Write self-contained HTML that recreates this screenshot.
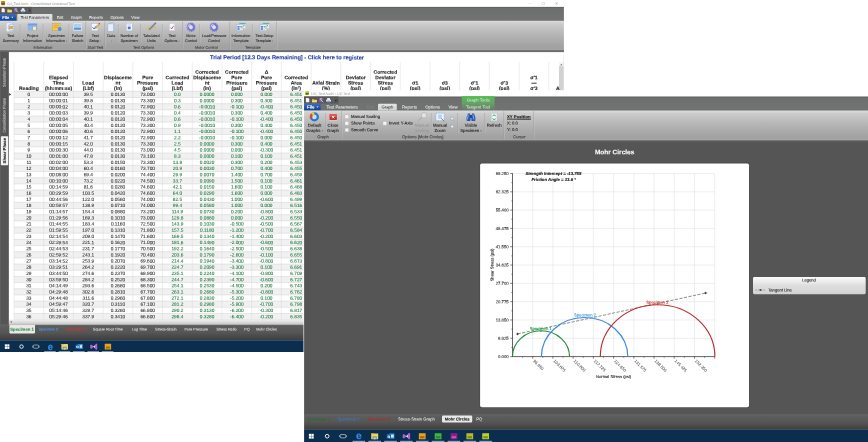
<!DOCTYPE html>
<html lang="en"><head><meta charset="utf-8"><title>CU_Test.hsdn - Consolidated Undrained Test / Mohr Circles</title>
<style>
html,body{margin:0;padding:0;background:#ffffff;}
body{width:868px;height:442px;overflow:hidden;}
svg{display:block;will-change:transform;}
svg text{font-family:"Liberation Sans",sans-serif;text-rendering:geometricPrecision;}
</style></head>
<body>
<svg width="868" height="442" viewBox="0 0 868 442">
<defs>
<linearGradient id="gRib" x1="0" y1="0" x2="0" y2="1">
 <stop offset="0" stop-color="#dddddd"/><stop offset="0.1" stop-color="#cccccc"/><stop offset="0.45" stop-color="#b6b6b6"/><stop offset="0.85" stop-color="#a3a3a3"/><stop offset="1" stop-color="#a0a0a0"/>
</linearGradient>
<linearGradient id="gBar" x1="0" y1="0" x2="0" y2="1">
 <stop offset="0" stop-color="#5c5c5c"/><stop offset="0.12" stop-color="#6d6e6e"/><stop offset="0.9" stop-color="#717272"/><stop offset="1" stop-color="#696a6a"/>
</linearGradient>
<linearGradient id="gFile" x1="0" y1="0" x2="0" y2="1">
 <stop offset="0" stop-color="#3a6cc0"/><stop offset="1" stop-color="#14408e"/>
</linearGradient>
<linearGradient id="gTabSel" x1="0" y1="0" x2="0" y2="1">
 <stop offset="0" stop-color="#e4e4e4"/><stop offset="1" stop-color="#d2d2d2"/>
</linearGradient>
<linearGradient id="gGreen" x1="0" y1="0" x2="0" y2="1">
 <stop offset="0" stop-color="#5cb45c"/><stop offset="0.45" stop-color="#64a464"/><stop offset="0.75" stop-color="#6a8a6a"/><stop offset="1" stop-color="#6c766c"/>
</linearGradient>
<linearGradient id="gBot" x1="0" y1="0" x2="0" y2="1">
 <stop offset="0" stop-color="#686868"/><stop offset="0.1" stop-color="#5d5d5d"/><stop offset="0.5" stop-color="#565656"/><stop offset="1" stop-color="#3d3d3d"/>
</linearGradient>
<linearGradient id="gScroll" x1="0" y1="0" x2="0" y2="1">
 <stop offset="0" stop-color="#f0f0f0"/><stop offset="0.5" stop-color="#dcdcdc"/><stop offset="1" stop-color="#c2c2c2"/>
</linearGradient>
<linearGradient id="gLegend" x1="0" y1="0" x2="0" y2="1">
 <stop offset="0" stop-color="#fbfbfb"/><stop offset="0.5" stop-color="#dedede"/><stop offset="1" stop-color="#d2d2d2"/>
</linearGradient>
<clipPath id="clipW1"><rect x="0" y="0" width="563.9" height="352"/></clipPath>
<clipPath id="clipGrid"><rect x="9" y="52" width="550" height="268"/></clipPath>
</defs>
<rect x="0.00" y="0.00" width="868.00" height="442.00" fill="#ffffff" />
<g id="win1" clip-path="url(#clipW1)">
<rect x="0.00" y="0.00" width="563.90" height="6.70" fill="#ffffff" />
<rect x="1.10" y="1.00" width="4.00" height="4.20" fill="#c8861a" />
<rect x="1.60" y="2.80" width="3.00" height="1.90" fill="#7a4a08" />
<text x="7.00" y="4.90" transform="rotate(0.03 7.00 4.90)" font-size="3.4" fill="#b4b4b4" stroke="#b4b4b4" stroke-width="0.1" text-anchor="start" font-weight="normal" >CU_Test.hsdn - Consolidated Undrained Test</text>
<text x="530.30" y="4.60" transform="rotate(0.03 530.30 4.60)" font-size="4.5" fill="#b8b8b8" stroke="#b8b8b8" stroke-width="0.1" text-anchor="middle" font-weight="normal" >–</text>
<text x="543.20" y="4.60" transform="rotate(0.03 543.20 4.60)" font-size="3.6" fill="#b8b8b8" stroke="#b8b8b8" stroke-width="0.1" text-anchor="middle" font-weight="normal" >▢</text>
<text x="556.60" y="4.80" transform="rotate(0.03 556.60 4.80)" font-size="3.8" fill="#b8b8b8" stroke="#b8b8b8" stroke-width="0.1" text-anchor="middle" font-weight="normal" >✕</text>
<rect x="0.00" y="6.90" width="563.90" height="14.10" fill="url(#gBar)" />
<rect x="0.00" y="20.50" width="563.90" height="0.80" fill="#6b6c6c" />
<rect x="0.00" y="6.90" width="31.50" height="7.00" fill="#565656" />
<g transform="translate(0.00 0.00) scale(1.0) translate(0 10.3) scale(1 0.9) translate(0 -10.3)">
<path d="M1.6 8.0 h2.2 l1.0 1.0 v3.4 h-3.2z" fill="#f6f6f6"/>
<path d="M7.3 9.2 h1.7 l0.5 0.6 h2.3 v2.7 h-4.5z" fill="#f2c744"/>
<path d="M7.3 12.5 l0.9 -1.9 h4.0 l-0.4 1.9z" fill="#f8dc7a"/>
<rect x="14.10" y="8.20" width="3.50" height="3.90" fill="#7668c4" />
<rect x="14.80" y="8.20" width="2.00" height="1.20" fill="#b8b0e8" />
<line x1="15.20" y1="9.20" x2="18.00" y2="12.60" stroke="#ecc878" stroke-width="0.9" />
<rect x="20.70" y="9.60" width="4.60" height="2.20" fill="#e2e6ee" rx="0.5"/>
<rect x="21.70" y="8.10" width="2.60" height="1.70" fill="#ffffff" />
<rect x="21.80" y="10.90" width="2.40" height="1.70" fill="#62a0e0" />
<line x1="27.30" y1="8.30" x2="27.30" y2="12.70" stroke="#8c8c8c" stroke-width="0.45" />
<path d="M28.8 10.2 h2.2 l-1.1 1.4z" fill="#242424"/>
</g>
<rect x="0.00" y="13.90" width="16.00" height="7.10" fill="url(#gFile)" />
<text x="5.70" y="18.90" transform="rotate(0.03 5.70 18.90)" font-size="4.0" fill="#ffffff" stroke="#ffffff" stroke-width="0.1" text-anchor="middle" font-weight="bold" >File</text>
<path d="M11.4 16.8 h1.9 l-0.95 1.3z" fill="#ffffff"/>
<path d="M17.3 21.1 V14.8 q0 -0.9 0.9 -0.9 h33.3 q0.9 0 0.9 0.9 V21.1z" fill="url(#gTabSel)"/>
<text x="34.80" y="18.80" transform="rotate(0.03 34.80 18.80)" font-size="3.9" fill="#2c2c2c" stroke="#2c2c2c" stroke-width="0.04" text-anchor="middle" font-weight="normal" >Test Parameters</text>
<text x="60.00" y="18.80" transform="rotate(0.03 60.00 18.80)" font-size="3.85" fill="#e6e6e6" stroke="#e6e6e6" stroke-width="0.1" text-anchor="middle" font-weight="normal" >Edit</text>
<text x="76.30" y="18.80" transform="rotate(0.03 76.30 18.80)" font-size="3.85" fill="#e6e6e6" stroke="#e6e6e6" stroke-width="0.1" text-anchor="middle" font-weight="normal" >Graph</text>
<text x="96.10" y="18.80" transform="rotate(0.03 96.10 18.80)" font-size="3.85" fill="#e6e6e6" stroke="#e6e6e6" stroke-width="0.1" text-anchor="middle" font-weight="normal" >Reports</text>
<text x="117.10" y="18.80" transform="rotate(0.03 117.10 18.80)" font-size="3.85" fill="#e6e6e6" stroke="#e6e6e6" stroke-width="0.1" text-anchor="middle" font-weight="normal" >Options</text>
<text x="135.50" y="18.80" transform="rotate(0.03 135.50 18.80)" font-size="3.85" fill="#e6e6e6" stroke="#e6e6e6" stroke-width="0.1" text-anchor="middle" font-weight="normal" >View</text>
<rect x="0.00" y="20.75" width="563.90" height="29.30" fill="url(#gRib)" />
<rect x="0.00" y="49.00" width="563.90" height="1.00" fill="#a5a5a5" />
<rect x="0.00" y="50.00" width="563.90" height="2.10" fill="#6d6d6d" />
<rect x="0.00" y="50.00" width="563.90" height="0.90" fill="#757575" />
<rect x="6.20" y="22.90" width="6.20" height="8.60" fill="#eef2fa" stroke="#a9badb" stroke-width="0.4"/>
<circle cx="11.40" cy="27.40" r="3.3" fill="#dbe9fb" stroke="#8fb6ea" stroke-width="0.7"/>
<rect x="8.90" y="26.10" width="4.60" height="3.00" fill="#e8a84c" rx="0.5"/>
<text x="10.80" y="36.90" transform="rotate(0.03 10.80 36.90)" font-size="3.78" fill="#303030" stroke="#303030" stroke-width="0.1" text-anchor="middle" font-weight="normal" >Test</text>
<text x="10.80" y="42.10" transform="rotate(0.03 10.80 42.10)" font-size="3.78" fill="#303030" stroke="#303030" stroke-width="0.1" text-anchor="middle" font-weight="normal" >Summary</text>
<rect x="27.90" y="23.60" width="9.20" height="6.60" fill="#6f9fe0" rx="0.6"/>
<rect x="27.90" y="25.40" width="9.20" height="4.80" fill="#8ab6ee" />
<rect x="32.90" y="26.40" width="3.20" height="4.00" fill="#f3ecd0" stroke="#9a8a5a" stroke-width="0.3"/>
<text x="32.50" y="36.90" transform="rotate(0.03 32.50 36.90)" font-size="3.78" fill="#303030" stroke="#303030" stroke-width="0.1" text-anchor="middle" font-weight="normal" >Project</text>
<text x="32.50" y="42.10" transform="rotate(0.03 32.50 42.10)" font-size="3.78" fill="#303030" stroke="#303030" stroke-width="0.1" text-anchor="middle" font-weight="normal" >Information</text>
<rect x="52.50" y="23.20" width="7.60" height="7.40" fill="#f0c55c" stroke="#c89a30" stroke-width="0.4"/>
<line x1="53.90" y1="25.40" x2="58.50" y2="25.40" stroke="#b98a28" stroke-width="0.5" />
<line x1="53.90" y1="27.40" x2="58.50" y2="27.40" stroke="#b98a28" stroke-width="0.5" />
<circle cx="59.70" cy="29.00" r="1.9" fill="#4a90e2"/>
<text x="56.50" y="36.90" transform="rotate(0.03 56.50 36.90)" font-size="3.78" fill="#303030" stroke="#303030" stroke-width="0.1" text-anchor="middle" font-weight="normal" >Specimen</text>
<text x="56.50" y="42.10" transform="rotate(0.03 56.50 42.10)" font-size="3.78" fill="#303030" stroke="#303030" stroke-width="0.1" text-anchor="middle" font-weight="normal" >Information ·</text>
<rect x="73.30" y="23.00" width="8.40" height="7.80" fill="#eef4fc" stroke="#b8c8e0" stroke-width="0.4"/>
<rect x="74.10" y="23.80" width="6.80" height="6.00" fill="#a8d0f6" />
<rect x="74.10" y="27.80" width="6.80" height="2.00" fill="#5c92d8" />
<circle cx="78.10" cy="25.80" r="0.9" fill="#f6d46a"/>
<text x="77.50" y="36.90" transform="rotate(0.03 77.50 36.90)" font-size="3.78" fill="#303030" stroke="#303030" stroke-width="0.1" text-anchor="middle" font-weight="normal" >Failure</text>
<text x="77.50" y="42.10" transform="rotate(0.03 77.50 42.10)" font-size="3.78" fill="#303030" stroke="#303030" stroke-width="0.1" text-anchor="middle" font-weight="normal" >Sketch</text>
<rect x="91.50" y="23.60" width="6.40" height="7.20" fill="#f4f6fb" stroke="#a8b4cc" stroke-width="0.4"/>
<path d="M92.70 27.40 l1.4 1.6 l2.4 -3.4" stroke="#3058c8" stroke-width="0.9" fill="none"/>
<line x1="95.50" y1="28.80" x2="99.50" y2="23.60" stroke="#e0a83a" stroke-width="1.3" />
<line x1="98.90" y1="24.20" x2="99.70" y2="23.20" stroke="#d04848" stroke-width="1.3" />
<text x="95.30" y="36.90" transform="rotate(0.03 95.30 36.90)" font-size="3.78" fill="#303030" stroke="#303030" stroke-width="0.1" text-anchor="middle" font-weight="normal" >Test</text>
<text x="95.30" y="42.10" transform="rotate(0.03 95.30 42.10)" font-size="3.78" fill="#303030" stroke="#303030" stroke-width="0.1" text-anchor="middle" font-weight="normal" >Setup ·</text>
<rect x="109.30" y="22.90" width="5.40" height="7.40" fill="#cfdcf0" stroke="#8fa8d0" stroke-width="0.45"/>
<rect x="107.90" y="23.90" width="5.40" height="7.40" fill="#e8effa" stroke="#8fa8d0" stroke-width="0.45"/>
<text x="111.30" y="36.90" transform="rotate(0.03 111.30 36.90)" font-size="3.78" fill="#303030" stroke="#303030" stroke-width="0.1" text-anchor="middle" font-weight="normal" >Data</text>
<text x="111.30" y="42.10" transform="rotate(0.03 111.30 42.10)" font-size="3.78" fill="#303030" stroke="#303030" stroke-width="0.1" text-anchor="middle" font-weight="normal" >·</text>
<rect x="126.20" y="23.20" width="6.00" height="7.60" fill="#f2f6fc" stroke="#a9bbd8" stroke-width="0.4"/>
<rect x="127.80" y="26.60" width="2.80" height="2.60" fill="#4a78cc" />
<line x1="127.40" y1="25.00" x2="131.00" y2="25.00" stroke="#8aa4d4" stroke-width="0.5" />
<text x="129.20" y="36.90" transform="rotate(0.03 129.20 36.90)" font-size="3.78" fill="#303030" stroke="#303030" stroke-width="0.1" text-anchor="middle" font-weight="normal" >Number of</text>
<text x="129.20" y="42.10" transform="rotate(0.03 129.20 42.10)" font-size="3.78" fill="#303030" stroke="#303030" stroke-width="0.1" text-anchor="middle" font-weight="normal" >Specimen</text>
<path d="M147.00 27.80 l7.6 -2.6 l1 2.6 l-7.6 2.6z" fill="#e8b84a"/>
<line x1="149.20" y1="29.80" x2="154.80" y2="23.80" stroke="#4a8ee0" stroke-width="1.5" />
<circle cx="155.30" cy="23.30" r="0.9" fill="#e04a4a"/>
<text x="151.40" y="36.90" transform="rotate(0.03 151.40 36.90)" font-size="3.78" fill="#303030" stroke="#303030" stroke-width="0.1" text-anchor="middle" font-weight="normal" >Tabulated</text>
<text x="151.40" y="42.10" transform="rotate(0.03 151.40 42.10)" font-size="3.78" fill="#303030" stroke="#303030" stroke-width="0.1" text-anchor="middle" font-weight="normal" >Units</text>
<rect x="169.30" y="23.20" width="5.40" height="7.60" fill="#f4f6fc" stroke="#a9bbd8" stroke-width="0.4"/>
<path d="M170.70 27.60 l1.0 1.2 l1.8 -2.6" stroke="#d43a3a" stroke-width="0.9" fill="none"/>
<text x="172.10" y="36.90" transform="rotate(0.03 172.10 36.90)" font-size="3.78" fill="#303030" stroke="#303030" stroke-width="0.1" text-anchor="middle" font-weight="normal" >Test</text>
<text x="172.10" y="42.10" transform="rotate(0.03 172.10 42.10)" font-size="3.78" fill="#303030" stroke="#303030" stroke-width="0.1" text-anchor="middle" font-weight="normal" >Options ·</text>
<g transform="translate(191.00 27.20) rotate(-18) scale(0.92 1)">
<circle cx="0" cy="0" r="4.35" fill="none" stroke="#7c7cd6" stroke-width="1.0" stroke-dasharray="1.25 1.03"/>
<circle cx="0" cy="0" r="3.0" fill="none" stroke="#7474d2" stroke-width="2.1"/>
<path d="M-2.9 -0.8 A3.0 3.0 0 0 1 0.8 -2.9" fill="none" stroke="#b4b6f0" stroke-width="1.5"/>
<circle cx="0" cy="0" r="1.9" fill="#dfe1f4"/>
</g>
<text x="191.00" y="36.90" transform="rotate(0.03 191.00 36.90)" font-size="3.78" fill="#303030" stroke="#303030" stroke-width="0.1" text-anchor="middle" font-weight="normal" >Motor</text>
<text x="191.00" y="42.10" transform="rotate(0.03 191.00 42.10)" font-size="3.78" fill="#303030" stroke="#303030" stroke-width="0.1" text-anchor="middle" font-weight="normal" >Control</text>
<g transform="translate(214.00 27.20) rotate(-18) scale(0.92 1)">
<circle cx="0" cy="0" r="4.35" fill="none" stroke="#7c7cd6" stroke-width="1.0" stroke-dasharray="1.25 1.03"/>
<circle cx="0" cy="0" r="3.0" fill="none" stroke="#7474d2" stroke-width="2.1"/>
<path d="M-2.9 -0.8 A3.0 3.0 0 0 1 0.8 -2.9" fill="none" stroke="#b4b6f0" stroke-width="1.5"/>
<circle cx="0" cy="0" r="1.9" fill="#dfe1f4"/>
</g>
<text x="214.00" y="36.90" transform="rotate(0.03 214.00 36.90)" font-size="3.78" fill="#303030" stroke="#303030" stroke-width="0.1" text-anchor="middle" font-weight="normal" >Load/Pressure</text>
<text x="214.00" y="42.10" transform="rotate(0.03 214.00 42.10)" font-size="3.78" fill="#303030" stroke="#303030" stroke-width="0.1" text-anchor="middle" font-weight="normal" >Control</text>
<rect x="239.40" y="23.00" width="6.20" height="5.60" fill="#e4eef8" stroke="#9fc0d4" stroke-width="0.35"/>
<rect x="239.40" y="23.00" width="6.20" height="1.30" fill="#5cb6ae" />
<rect x="236.60" y="24.80" width="6.40" height="5.80" fill="#eaf1fa" stroke="#8faed4" stroke-width="0.35"/>
<rect x="237.40" y="26.00" width="2.20" height="1.60" fill="#4a80cc" />
<rect x="237.40" y="28.20" width="2.20" height="1.60" fill="#4a80cc" />
<rect x="240.20" y="26.00" width="2.00" height="1.60" fill="#7aa6e2" />
<line x1="240.80" y1="30.10" x2="243.80" y2="25.80" stroke="#e8cc74" stroke-width="1.0" />
<line x1="243.50" y1="26.20" x2="244.10" y2="25.30" stroke="#5a5a6a" stroke-width="0.9" />
<text x="241.00" y="36.90" transform="rotate(0.03 241.00 36.90)" font-size="3.78" fill="#303030" stroke="#303030" stroke-width="0.1" text-anchor="middle" font-weight="normal" >Information</text>
<text x="241.00" y="42.10" transform="rotate(0.03 241.00 42.10)" font-size="3.78" fill="#303030" stroke="#303030" stroke-width="0.1" text-anchor="middle" font-weight="normal" >Template</text>
<rect x="262.90" y="23.00" width="6.20" height="5.60" fill="#e4eef8" stroke="#9fc0d4" stroke-width="0.35"/>
<rect x="262.90" y="23.00" width="6.20" height="1.30" fill="#5cb6ae" />
<rect x="260.10" y="24.80" width="6.40" height="5.80" fill="#eaf1fa" stroke="#8faed4" stroke-width="0.35"/>
<rect x="260.90" y="26.00" width="2.20" height="1.60" fill="#4a80cc" />
<rect x="260.90" y="28.20" width="2.20" height="1.60" fill="#4a80cc" />
<rect x="263.70" y="26.00" width="2.00" height="1.60" fill="#7aa6e2" />
<line x1="264.30" y1="30.10" x2="267.30" y2="25.80" stroke="#e8cc74" stroke-width="1.0" />
<line x1="267.00" y1="26.20" x2="267.60" y2="25.30" stroke="#5a5a6a" stroke-width="0.9" />
<text x="264.50" y="36.90" transform="rotate(0.03 264.50 36.90)" font-size="3.78" fill="#303030" stroke="#303030" stroke-width="0.1" text-anchor="middle" font-weight="normal" >Test Setup</text>
<text x="264.50" y="42.10" transform="rotate(0.03 264.50 42.10)" font-size="3.78" fill="#303030" stroke="#303030" stroke-width="0.1" text-anchor="middle" font-weight="normal" >Template ·</text>
<line x1="20.20" y1="24.00" x2="20.20" y2="42.50" stroke="#979797" stroke-width="0.5" />
<line x1="20.70" y1="24.00" x2="20.70" y2="42.50" stroke="#d2d2d2" stroke-width="0.4" />
<line x1="43.20" y1="24.00" x2="43.20" y2="42.50" stroke="#979797" stroke-width="0.5" />
<line x1="43.70" y1="24.00" x2="43.70" y2="42.50" stroke="#d2d2d2" stroke-width="0.4" />
<line x1="69.10" y1="24.00" x2="69.10" y2="42.50" stroke="#979797" stroke-width="0.5" />
<line x1="69.60" y1="24.00" x2="69.60" y2="42.50" stroke="#d2d2d2" stroke-width="0.4" />
<line x1="118.40" y1="24.00" x2="118.40" y2="42.50" stroke="#979797" stroke-width="0.5" />
<line x1="118.90" y1="24.00" x2="118.90" y2="42.50" stroke="#d2d2d2" stroke-width="0.4" />
<line x1="140.70" y1="24.00" x2="140.70" y2="42.50" stroke="#979797" stroke-width="0.5" />
<line x1="141.20" y1="24.00" x2="141.20" y2="42.50" stroke="#d2d2d2" stroke-width="0.4" />
<line x1="162.40" y1="24.00" x2="162.40" y2="42.50" stroke="#979797" stroke-width="0.5" />
<line x1="162.90" y1="24.00" x2="162.90" y2="42.50" stroke="#d2d2d2" stroke-width="0.4" />
<line x1="199.50" y1="24.00" x2="199.50" y2="42.50" stroke="#979797" stroke-width="0.5" />
<line x1="200.00" y1="24.00" x2="200.00" y2="42.50" stroke="#d2d2d2" stroke-width="0.4" />
<line x1="252.40" y1="24.00" x2="252.40" y2="42.50" stroke="#979797" stroke-width="0.5" />
<line x1="252.90" y1="24.00" x2="252.90" y2="42.50" stroke="#d2d2d2" stroke-width="0.4" />
<line x1="85.80" y1="21.50" x2="85.80" y2="49.20" stroke="#909090" stroke-width="0.5" />
<line x1="86.30" y1="21.50" x2="86.30" y2="49.20" stroke="#d2d2d2" stroke-width="0.4" />
<line x1="104.80" y1="21.50" x2="104.80" y2="49.20" stroke="#909090" stroke-width="0.5" />
<line x1="105.30" y1="21.50" x2="105.30" y2="49.20" stroke="#d2d2d2" stroke-width="0.4" />
<line x1="182.60" y1="21.50" x2="182.60" y2="49.20" stroke="#909090" stroke-width="0.5" />
<line x1="183.10" y1="21.50" x2="183.10" y2="49.20" stroke="#d2d2d2" stroke-width="0.4" />
<line x1="229.70" y1="21.50" x2="229.70" y2="49.20" stroke="#909090" stroke-width="0.5" />
<line x1="230.20" y1="21.50" x2="230.20" y2="49.20" stroke="#d2d2d2" stroke-width="0.4" />
<line x1="276.50" y1="21.50" x2="276.50" y2="49.20" stroke="#909090" stroke-width="0.5" />
<line x1="277.00" y1="21.50" x2="277.00" y2="49.20" stroke="#d2d2d2" stroke-width="0.4" />
<text x="43.00" y="48.70" transform="rotate(0.03 43.00 48.70)" font-size="3.78" fill="#3c3c3c" stroke="#3c3c3c" stroke-width="0.1" text-anchor="middle" font-weight="normal" >Information</text>
<text x="95.50" y="48.70" transform="rotate(0.03 95.50 48.70)" font-size="3.78" fill="#3c3c3c" stroke="#3c3c3c" stroke-width="0.1" text-anchor="middle" font-weight="normal" >Start Test</text>
<text x="143.70" y="48.70" transform="rotate(0.03 143.70 48.70)" font-size="3.78" fill="#3c3c3c" stroke="#3c3c3c" stroke-width="0.1" text-anchor="middle" font-weight="normal" >Test Options</text>
<text x="206.30" y="48.70" transform="rotate(0.03 206.30 48.70)" font-size="3.78" fill="#3c3c3c" stroke="#3c3c3c" stroke-width="0.1" text-anchor="middle" font-weight="normal" >Motor Control</text>
<text x="253.00" y="48.70" transform="rotate(0.03 253.00 48.70)" font-size="3.78" fill="#3c3c3c" stroke="#3c3c3c" stroke-width="0.1" text-anchor="middle" font-weight="normal" >Template</text>
<rect x="0.00" y="51.70" width="8.85" height="273.40" fill="#555555" />
<rect x="0.00" y="51.70" width="0.90" height="273.40" fill="#606060" />
<text transform="translate(5.60 72.50) rotate(-90.03)" font-size="3.78" fill="#c8c8c8" stroke="#c8c8c8" stroke-width="0.1" text-anchor="middle" font-weight="normal">Saturation Phase</text>
<text transform="translate(5.60 115.50) rotate(-90.03)" font-size="3.78" fill="#c8c8c8" stroke="#c8c8c8" stroke-width="0.1" text-anchor="middle" font-weight="normal">Consolidation Phase</text>
<rect x="0.90" y="136.30" width="7.30" height="28.90" fill="#f4f4f4" rx="0.8"/>
<text transform="translate(5.90 150.70) rotate(-90.03)" font-size="4.25" fill="#1c1c1c" stroke="#1c1c1c" stroke-width="0.1" text-anchor="middle" font-weight="bold">Shear Phase</text>
<text x="287.00" y="59.35" transform="rotate(0.03 287.00 59.35)" font-size="5.66" fill="#263ca4" stroke="#263ca4" stroke-width="0.1" text-anchor="middle" font-weight="bold" >Trial Period [12.3 Days Remaining] - Click here to register</text>
<g clip-path="url(#clipGrid)">
<rect x="14.00" y="91.30" width="545.00" height="6.17" fill="#f1f1f1" />
<rect x="14.00" y="103.64" width="545.00" height="6.17" fill="#f1f1f1" />
<rect x="14.00" y="115.98" width="545.00" height="6.17" fill="#f1f1f1" />
<rect x="14.00" y="128.32" width="545.00" height="6.17" fill="#f1f1f1" />
<rect x="14.00" y="140.66" width="545.00" height="6.17" fill="#f1f1f1" />
<rect x="14.00" y="153.00" width="545.00" height="6.17" fill="#f1f1f1" />
<rect x="14.00" y="165.34" width="545.00" height="6.17" fill="#f1f1f1" />
<rect x="14.00" y="177.68" width="545.00" height="6.17" fill="#f1f1f1" />
<rect x="14.00" y="190.02" width="545.00" height="6.17" fill="#f1f1f1" />
<rect x="14.00" y="202.36" width="545.00" height="6.17" fill="#f1f1f1" />
<rect x="14.00" y="214.70" width="545.00" height="6.17" fill="#f1f1f1" />
<rect x="14.00" y="227.04" width="545.00" height="6.17" fill="#f1f1f1" />
<rect x="14.00" y="239.38" width="545.00" height="6.17" fill="#f1f1f1" />
<rect x="14.00" y="251.72" width="545.00" height="6.17" fill="#f1f1f1" />
<rect x="14.00" y="264.06" width="545.00" height="6.17" fill="#f1f1f1" />
<rect x="14.00" y="276.40" width="545.00" height="6.17" fill="#f1f1f1" />
<rect x="14.00" y="288.74" width="545.00" height="6.17" fill="#f1f1f1" />
<rect x="14.00" y="301.08" width="545.00" height="6.17" fill="#f1f1f1" />
<rect x="14.00" y="313.42" width="545.00" height="6.17" fill="#f1f1f1" />
<line x1="14.00" y1="91.30" x2="559.00" y2="91.30" stroke="#cdcdcd" stroke-width="0.45" />
<line x1="14.00" y1="97.47" x2="559.00" y2="97.47" stroke="#cdcdcd" stroke-width="0.45" />
<line x1="14.00" y1="103.64" x2="559.00" y2="103.64" stroke="#cdcdcd" stroke-width="0.45" />
<line x1="14.00" y1="109.81" x2="559.00" y2="109.81" stroke="#cdcdcd" stroke-width="0.45" />
<line x1="14.00" y1="115.98" x2="559.00" y2="115.98" stroke="#cdcdcd" stroke-width="0.45" />
<line x1="14.00" y1="122.15" x2="559.00" y2="122.15" stroke="#cdcdcd" stroke-width="0.45" />
<line x1="14.00" y1="128.32" x2="559.00" y2="128.32" stroke="#cdcdcd" stroke-width="0.45" />
<line x1="14.00" y1="134.49" x2="559.00" y2="134.49" stroke="#cdcdcd" stroke-width="0.45" />
<line x1="14.00" y1="140.66" x2="559.00" y2="140.66" stroke="#cdcdcd" stroke-width="0.45" />
<line x1="14.00" y1="146.83" x2="559.00" y2="146.83" stroke="#cdcdcd" stroke-width="0.45" />
<line x1="14.00" y1="153.00" x2="559.00" y2="153.00" stroke="#cdcdcd" stroke-width="0.45" />
<line x1="14.00" y1="159.17" x2="559.00" y2="159.17" stroke="#cdcdcd" stroke-width="0.45" />
<line x1="14.00" y1="165.34" x2="559.00" y2="165.34" stroke="#cdcdcd" stroke-width="0.45" />
<line x1="14.00" y1="171.51" x2="559.00" y2="171.51" stroke="#cdcdcd" stroke-width="0.45" />
<line x1="14.00" y1="177.68" x2="559.00" y2="177.68" stroke="#cdcdcd" stroke-width="0.45" />
<line x1="14.00" y1="183.85" x2="559.00" y2="183.85" stroke="#cdcdcd" stroke-width="0.45" />
<line x1="14.00" y1="190.02" x2="559.00" y2="190.02" stroke="#cdcdcd" stroke-width="0.45" />
<line x1="14.00" y1="196.19" x2="559.00" y2="196.19" stroke="#cdcdcd" stroke-width="0.45" />
<line x1="14.00" y1="202.36" x2="559.00" y2="202.36" stroke="#cdcdcd" stroke-width="0.45" />
<line x1="14.00" y1="208.53" x2="559.00" y2="208.53" stroke="#cdcdcd" stroke-width="0.45" />
<line x1="14.00" y1="214.70" x2="559.00" y2="214.70" stroke="#cdcdcd" stroke-width="0.45" />
<line x1="14.00" y1="220.87" x2="559.00" y2="220.87" stroke="#cdcdcd" stroke-width="0.45" />
<line x1="14.00" y1="227.04" x2="559.00" y2="227.04" stroke="#cdcdcd" stroke-width="0.45" />
<line x1="14.00" y1="233.21" x2="559.00" y2="233.21" stroke="#cdcdcd" stroke-width="0.45" />
<line x1="14.00" y1="239.38" x2="559.00" y2="239.38" stroke="#cdcdcd" stroke-width="0.45" />
<line x1="14.00" y1="245.55" x2="559.00" y2="245.55" stroke="#cdcdcd" stroke-width="0.45" />
<line x1="14.00" y1="251.72" x2="559.00" y2="251.72" stroke="#cdcdcd" stroke-width="0.45" />
<line x1="14.00" y1="257.89" x2="559.00" y2="257.89" stroke="#cdcdcd" stroke-width="0.45" />
<line x1="14.00" y1="264.06" x2="559.00" y2="264.06" stroke="#cdcdcd" stroke-width="0.45" />
<line x1="14.00" y1="270.23" x2="559.00" y2="270.23" stroke="#cdcdcd" stroke-width="0.45" />
<line x1="14.00" y1="276.40" x2="559.00" y2="276.40" stroke="#cdcdcd" stroke-width="0.45" />
<line x1="14.00" y1="282.57" x2="559.00" y2="282.57" stroke="#cdcdcd" stroke-width="0.45" />
<line x1="14.00" y1="288.74" x2="559.00" y2="288.74" stroke="#cdcdcd" stroke-width="0.45" />
<line x1="14.00" y1="294.91" x2="559.00" y2="294.91" stroke="#cdcdcd" stroke-width="0.45" />
<line x1="14.00" y1="301.08" x2="559.00" y2="301.08" stroke="#cdcdcd" stroke-width="0.45" />
<line x1="14.00" y1="307.25" x2="559.00" y2="307.25" stroke="#cdcdcd" stroke-width="0.45" />
<line x1="14.00" y1="313.42" x2="559.00" y2="313.42" stroke="#cdcdcd" stroke-width="0.45" />
<line x1="14.00" y1="319.59" x2="559.00" y2="319.59" stroke="#cdcdcd" stroke-width="0.45" />
<line x1="14.00" y1="62.00" x2="14.00" y2="319.59" stroke="#d6d6d6" stroke-width="0.45" />
<line x1="43.71" y1="62.00" x2="43.71" y2="319.59" stroke="#d6d6d6" stroke-width="0.45" />
<line x1="73.42" y1="62.00" x2="73.42" y2="319.59" stroke="#d6d6d6" stroke-width="0.45" />
<line x1="103.13" y1="62.00" x2="103.13" y2="319.59" stroke="#d6d6d6" stroke-width="0.45" />
<line x1="132.84" y1="62.00" x2="132.84" y2="319.59" stroke="#d6d6d6" stroke-width="0.45" />
<line x1="162.55" y1="62.00" x2="162.55" y2="319.59" stroke="#d6d6d6" stroke-width="0.45" />
<line x1="192.26" y1="62.00" x2="192.26" y2="319.59" stroke="#d6d6d6" stroke-width="0.45" />
<line x1="221.97" y1="62.00" x2="221.97" y2="319.59" stroke="#d6d6d6" stroke-width="0.45" />
<line x1="251.68" y1="62.00" x2="251.68" y2="319.59" stroke="#d6d6d6" stroke-width="0.45" />
<line x1="281.39" y1="62.00" x2="281.39" y2="319.59" stroke="#d6d6d6" stroke-width="0.45" />
<line x1="311.10" y1="62.00" x2="311.10" y2="319.59" stroke="#d6d6d6" stroke-width="0.45" />
<line x1="340.81" y1="62.00" x2="340.81" y2="319.59" stroke="#d6d6d6" stroke-width="0.45" />
<line x1="370.52" y1="62.00" x2="370.52" y2="319.59" stroke="#d6d6d6" stroke-width="0.45" />
<line x1="400.23" y1="62.00" x2="400.23" y2="319.59" stroke="#d6d6d6" stroke-width="0.45" />
<line x1="429.94" y1="62.00" x2="429.94" y2="319.59" stroke="#d6d6d6" stroke-width="0.45" />
<line x1="459.65" y1="62.00" x2="459.65" y2="319.59" stroke="#d6d6d6" stroke-width="0.45" />
<line x1="489.36" y1="62.00" x2="489.36" y2="319.59" stroke="#d6d6d6" stroke-width="0.45" />
<line x1="519.07" y1="62.00" x2="519.07" y2="319.59" stroke="#d6d6d6" stroke-width="0.45" />
<line x1="548.78" y1="62.00" x2="548.78" y2="319.59" stroke="#d6d6d6" stroke-width="0.45" />
<line x1="578.49" y1="62.00" x2="578.49" y2="319.59" stroke="#d6d6d6" stroke-width="0.45" />
<text x="28.86" y="90.10" transform="rotate(0.03 28.86 90.10)" font-size="5.0" fill="#1e1e1e" stroke="#1e1e1e" stroke-width="0.1" text-anchor="middle" font-weight="bold" >Reading</text>
<text x="58.56" y="79.16" transform="rotate(0.03 58.56 79.16)" font-size="5.0" fill="#1e1e1e" stroke="#1e1e1e" stroke-width="0.1" text-anchor="middle" font-weight="bold" >Elapsed</text>
<text x="58.56" y="84.63" transform="rotate(0.03 58.56 84.63)" font-size="5.0" fill="#1e1e1e" stroke="#1e1e1e" stroke-width="0.1" text-anchor="middle" font-weight="bold" >Time</text>
<text x="58.56" y="90.10" transform="rotate(0.03 58.56 90.10)" font-size="5.0" fill="#1e1e1e" stroke="#1e1e1e" stroke-width="0.1" text-anchor="middle" font-weight="bold" >(hh:mm:ss)</text>
<text x="88.28" y="84.63" transform="rotate(0.03 88.28 84.63)" font-size="5.0" fill="#1e1e1e" stroke="#1e1e1e" stroke-width="0.1" text-anchor="middle" font-weight="bold" >Load</text>
<text x="88.28" y="90.10" transform="rotate(0.03 88.28 90.10)" font-size="5.0" fill="#1e1e1e" stroke="#1e1e1e" stroke-width="0.1" text-anchor="middle" font-weight="bold" >(Lbf)</text>
<text x="117.98" y="79.16" transform="rotate(0.03 117.98 79.16)" font-size="5.0" fill="#1e1e1e" stroke="#1e1e1e" stroke-width="0.1" text-anchor="middle" font-weight="bold" >Displaceme</text>
<text x="117.98" y="84.63" transform="rotate(0.03 117.98 84.63)" font-size="5.0" fill="#1e1e1e" stroke="#1e1e1e" stroke-width="0.1" text-anchor="middle" font-weight="bold" >nt</text>
<text x="117.98" y="90.10" transform="rotate(0.03 117.98 90.10)" font-size="5.0" fill="#1e1e1e" stroke="#1e1e1e" stroke-width="0.1" text-anchor="middle" font-weight="bold" >(in)</text>
<text x="147.69" y="79.16" transform="rotate(0.03 147.69 79.16)" font-size="5.0" fill="#1e1e1e" stroke="#1e1e1e" stroke-width="0.1" text-anchor="middle" font-weight="bold" >Pore</text>
<text x="147.69" y="84.63" transform="rotate(0.03 147.69 84.63)" font-size="5.0" fill="#1e1e1e" stroke="#1e1e1e" stroke-width="0.1" text-anchor="middle" font-weight="bold" >Pressure</text>
<text x="147.69" y="90.10" transform="rotate(0.03 147.69 90.10)" font-size="5.0" fill="#1e1e1e" stroke="#1e1e1e" stroke-width="0.1" text-anchor="middle" font-weight="bold" >(psi)</text>
<text x="177.41" y="79.16" transform="rotate(0.03 177.41 79.16)" font-size="5.0" fill="#1e1e1e" stroke="#1e1e1e" stroke-width="0.1" text-anchor="middle" font-weight="bold" >Corrected</text>
<text x="177.41" y="84.63" transform="rotate(0.03 177.41 84.63)" font-size="5.0" fill="#1e1e1e" stroke="#1e1e1e" stroke-width="0.1" text-anchor="middle" font-weight="bold" >Load</text>
<text x="177.41" y="90.10" transform="rotate(0.03 177.41 90.10)" font-size="5.0" fill="#1e1e1e" stroke="#1e1e1e" stroke-width="0.1" text-anchor="middle" font-weight="bold" >(Lbf)</text>
<text x="207.12" y="73.69" transform="rotate(0.03 207.12 73.69)" font-size="5.0" fill="#1e1e1e" stroke="#1e1e1e" stroke-width="0.1" text-anchor="middle" font-weight="bold" >Corrected</text>
<text x="207.12" y="79.16" transform="rotate(0.03 207.12 79.16)" font-size="5.0" fill="#1e1e1e" stroke="#1e1e1e" stroke-width="0.1" text-anchor="middle" font-weight="bold" >Displaceme</text>
<text x="207.12" y="84.63" transform="rotate(0.03 207.12 84.63)" font-size="5.0" fill="#1e1e1e" stroke="#1e1e1e" stroke-width="0.1" text-anchor="middle" font-weight="bold" >nt</text>
<text x="207.12" y="90.10" transform="rotate(0.03 207.12 90.10)" font-size="5.0" fill="#1e1e1e" stroke="#1e1e1e" stroke-width="0.1" text-anchor="middle" font-weight="bold" >(in)</text>
<text x="236.83" y="73.69" transform="rotate(0.03 236.83 73.69)" font-size="5.0" fill="#1e1e1e" stroke="#1e1e1e" stroke-width="0.1" text-anchor="middle" font-weight="bold" >Corrected</text>
<text x="236.83" y="79.16" transform="rotate(0.03 236.83 79.16)" font-size="5.0" fill="#1e1e1e" stroke="#1e1e1e" stroke-width="0.1" text-anchor="middle" font-weight="bold" >Pore</text>
<text x="236.83" y="84.63" transform="rotate(0.03 236.83 84.63)" font-size="5.0" fill="#1e1e1e" stroke="#1e1e1e" stroke-width="0.1" text-anchor="middle" font-weight="bold" >Pressure</text>
<text x="236.83" y="90.10" transform="rotate(0.03 236.83 90.10)" font-size="5.0" fill="#1e1e1e" stroke="#1e1e1e" stroke-width="0.1" text-anchor="middle" font-weight="bold" >(psi)</text>
<text x="266.53" y="73.69" transform="rotate(0.03 266.53 73.69)" font-size="5.0" fill="#1e1e1e" stroke="#1e1e1e" stroke-width="0.1" text-anchor="middle" font-weight="bold" >Δ</text>
<text x="266.53" y="79.16" transform="rotate(0.03 266.53 79.16)" font-size="5.0" fill="#1e1e1e" stroke="#1e1e1e" stroke-width="0.1" text-anchor="middle" font-weight="bold" >Pore</text>
<text x="266.53" y="84.63" transform="rotate(0.03 266.53 84.63)" font-size="5.0" fill="#1e1e1e" stroke="#1e1e1e" stroke-width="0.1" text-anchor="middle" font-weight="bold" >Pressure</text>
<text x="266.53" y="90.10" transform="rotate(0.03 266.53 90.10)" font-size="5.0" fill="#1e1e1e" stroke="#1e1e1e" stroke-width="0.1" text-anchor="middle" font-weight="bold" >(psi)</text>
<text x="296.25" y="79.16" transform="rotate(0.03 296.25 79.16)" font-size="5.0" fill="#1e1e1e" stroke="#1e1e1e" stroke-width="0.1" text-anchor="middle" font-weight="bold" >Corrected</text>
<text x="296.25" y="84.63" transform="rotate(0.03 296.25 84.63)" font-size="5.0" fill="#1e1e1e" stroke="#1e1e1e" stroke-width="0.1" text-anchor="middle" font-weight="bold" >Area</text>
<text x="296.25" y="90.10" transform="rotate(0.03 296.25 90.10)" font-size="5.0" fill="#1e1e1e" stroke="#1e1e1e" stroke-width="0.1" text-anchor="middle" font-weight="bold" >(in²)</text>
<text x="325.95" y="84.63" transform="rotate(0.03 325.95 84.63)" font-size="5.0" fill="#1e1e1e" stroke="#1e1e1e" stroke-width="0.1" text-anchor="middle" font-weight="bold" >Axial Strain</text>
<text x="325.95" y="90.10" transform="rotate(0.03 325.95 90.10)" font-size="5.0" fill="#1e1e1e" stroke="#1e1e1e" stroke-width="0.1" text-anchor="middle" font-weight="bold" >(%)</text>
<text x="355.67" y="79.16" transform="rotate(0.03 355.67 79.16)" font-size="5.0" fill="#1e1e1e" stroke="#1e1e1e" stroke-width="0.1" text-anchor="middle" font-weight="bold" >Deviator</text>
<text x="355.67" y="84.63" transform="rotate(0.03 355.67 84.63)" font-size="5.0" fill="#1e1e1e" stroke="#1e1e1e" stroke-width="0.1" text-anchor="middle" font-weight="bold" >Stress</text>
<text x="355.67" y="90.10" transform="rotate(0.03 355.67 90.10)" font-size="5.0" fill="#1e1e1e" stroke="#1e1e1e" stroke-width="0.1" text-anchor="middle" font-weight="bold" >(psi)</text>
<text x="385.38" y="73.69" transform="rotate(0.03 385.38 73.69)" font-size="5.0" fill="#1e1e1e" stroke="#1e1e1e" stroke-width="0.1" text-anchor="middle" font-weight="bold" >Corrected</text>
<text x="385.38" y="79.16" transform="rotate(0.03 385.38 79.16)" font-size="5.0" fill="#1e1e1e" stroke="#1e1e1e" stroke-width="0.1" text-anchor="middle" font-weight="bold" >Deviator</text>
<text x="385.38" y="84.63" transform="rotate(0.03 385.38 84.63)" font-size="5.0" fill="#1e1e1e" stroke="#1e1e1e" stroke-width="0.1" text-anchor="middle" font-weight="bold" >Stress</text>
<text x="385.38" y="90.10" transform="rotate(0.03 385.38 90.10)" font-size="5.0" fill="#1e1e1e" stroke="#1e1e1e" stroke-width="0.1" text-anchor="middle" font-weight="bold" >(psi)</text>
<text x="415.09" y="84.63" transform="rotate(0.03 415.09 84.63)" font-size="5.0" fill="#1e1e1e" stroke="#1e1e1e" stroke-width="0.1" text-anchor="middle" font-weight="bold" >σ1</text>
<text x="415.09" y="90.10" transform="rotate(0.03 415.09 90.10)" font-size="5.0" fill="#1e1e1e" stroke="#1e1e1e" stroke-width="0.1" text-anchor="middle" font-weight="bold" >(psi)</text>
<text x="444.80" y="84.63" transform="rotate(0.03 444.80 84.63)" font-size="5.0" fill="#1e1e1e" stroke="#1e1e1e" stroke-width="0.1" text-anchor="middle" font-weight="bold" >σ3</text>
<text x="444.80" y="90.10" transform="rotate(0.03 444.80 90.10)" font-size="5.0" fill="#1e1e1e" stroke="#1e1e1e" stroke-width="0.1" text-anchor="middle" font-weight="bold" >(psi)</text>
<text x="474.50" y="84.63" transform="rotate(0.03 474.50 84.63)" font-size="5.0" fill="#1e1e1e" stroke="#1e1e1e" stroke-width="0.1" text-anchor="middle" font-weight="bold" >σ&#x27;1</text>
<text x="474.50" y="90.10" transform="rotate(0.03 474.50 90.10)" font-size="5.0" fill="#1e1e1e" stroke="#1e1e1e" stroke-width="0.1" text-anchor="middle" font-weight="bold" >(psi)</text>
<text x="504.22" y="84.63" transform="rotate(0.03 504.22 84.63)" font-size="5.0" fill="#1e1e1e" stroke="#1e1e1e" stroke-width="0.1" text-anchor="middle" font-weight="bold" >σ&#x27;3</text>
<text x="504.22" y="90.10" transform="rotate(0.03 504.22 90.10)" font-size="5.0" fill="#1e1e1e" stroke="#1e1e1e" stroke-width="0.1" text-anchor="middle" font-weight="bold" >(psi)</text>
<text x="533.93" y="79.16" transform="rotate(0.03 533.93 79.16)" font-size="5.0" fill="#1e1e1e" stroke="#1e1e1e" stroke-width="0.1" text-anchor="middle" font-weight="bold" >σ&#x27;1</text>
<text x="533.93" y="84.63" transform="rotate(0.03 533.93 84.63)" font-size="5.0" fill="#1e1e1e" stroke="#1e1e1e" stroke-width="0.1" text-anchor="middle" font-weight="bold" >—</text>
<text x="533.93" y="90.10" transform="rotate(0.03 533.93 90.10)" font-size="5.0" fill="#1e1e1e" stroke="#1e1e1e" stroke-width="0.1" text-anchor="middle" font-weight="bold" >σ&#x27;3</text>
<text x="563.63" y="90.10" transform="rotate(0.03 563.63 90.10)" font-size="5.0" fill="#1e1e1e" stroke="#1e1e1e" stroke-width="0.1" text-anchor="middle" font-weight="bold" >A</text>
<text x="28.86" y="96.05" transform="rotate(0.03 28.86 96.05)" font-size="4.75" fill="#2a2a2a" stroke="#2a2a2a" stroke-width="0.07" text-anchor="middle" font-weight="normal" >0</text>
<text x="58.56" y="96.05" transform="rotate(0.03 58.56 96.05)" font-size="4.75" fill="#2a2a2a" stroke="#2a2a2a" stroke-width="0.07" text-anchor="middle" font-weight="normal" >00:00:00</text>
<text x="88.28" y="96.05" transform="rotate(0.03 88.28 96.05)" font-size="4.75" fill="#2a2a2a" stroke="#2a2a2a" stroke-width="0.07" text-anchor="middle" font-weight="normal" >39.5</text>
<text x="117.98" y="96.05" transform="rotate(0.03 117.98 96.05)" font-size="4.75" fill="#2a2a2a" stroke="#2a2a2a" stroke-width="0.07" text-anchor="middle" font-weight="normal" >0.0130</text>
<text x="147.69" y="96.05" transform="rotate(0.03 147.69 96.05)" font-size="4.75" fill="#2a2a2a" stroke="#2a2a2a" stroke-width="0.07" text-anchor="middle" font-weight="normal" >73.000</text>
<text x="177.41" y="96.05" transform="rotate(0.03 177.41 96.05)" font-size="4.75" fill="#1c763c" stroke="#1c763c" stroke-width="0.07" text-anchor="middle" font-weight="normal" >0.0</text>
<text x="207.12" y="96.05" transform="rotate(0.03 207.12 96.05)" font-size="4.75" fill="#1c763c" stroke="#1c763c" stroke-width="0.07" text-anchor="middle" font-weight="normal" >0.0000</text>
<text x="236.83" y="96.05" transform="rotate(0.03 236.83 96.05)" font-size="4.75" fill="#1c763c" stroke="#1c763c" stroke-width="0.07" text-anchor="middle" font-weight="normal" >0.000</text>
<text x="266.53" y="96.05" transform="rotate(0.03 266.53 96.05)" font-size="4.75" fill="#1c763c" stroke="#1c763c" stroke-width="0.07" text-anchor="middle" font-weight="normal" >0.000</text>
<text x="296.25" y="96.05" transform="rotate(0.03 296.25 96.05)" font-size="4.75" fill="#1c763c" stroke="#1c763c" stroke-width="0.07" text-anchor="middle" font-weight="normal" >6.451</text>
<text x="28.86" y="102.22" transform="rotate(0.03 28.86 102.22)" font-size="4.75" fill="#2a2a2a" stroke="#2a2a2a" stroke-width="0.07" text-anchor="middle" font-weight="normal" >1</text>
<text x="58.56" y="102.22" transform="rotate(0.03 58.56 102.22)" font-size="4.75" fill="#2a2a2a" stroke="#2a2a2a" stroke-width="0.07" text-anchor="middle" font-weight="normal" >00:00:01</text>
<text x="88.28" y="102.22" transform="rotate(0.03 88.28 102.22)" font-size="4.75" fill="#2a2a2a" stroke="#2a2a2a" stroke-width="0.07" text-anchor="middle" font-weight="normal" >39.8</text>
<text x="117.98" y="102.22" transform="rotate(0.03 117.98 102.22)" font-size="4.75" fill="#2a2a2a" stroke="#2a2a2a" stroke-width="0.07" text-anchor="middle" font-weight="normal" >0.0130</text>
<text x="147.69" y="102.22" transform="rotate(0.03 147.69 102.22)" font-size="4.75" fill="#2a2a2a" stroke="#2a2a2a" stroke-width="0.07" text-anchor="middle" font-weight="normal" >73.300</text>
<text x="177.41" y="102.22" transform="rotate(0.03 177.41 102.22)" font-size="4.75" fill="#1c763c" stroke="#1c763c" stroke-width="0.07" text-anchor="middle" font-weight="normal" >0.3</text>
<text x="207.12" y="102.22" transform="rotate(0.03 207.12 102.22)" font-size="4.75" fill="#1c763c" stroke="#1c763c" stroke-width="0.07" text-anchor="middle" font-weight="normal" >0.0000</text>
<text x="236.83" y="102.22" transform="rotate(0.03 236.83 102.22)" font-size="4.75" fill="#1c763c" stroke="#1c763c" stroke-width="0.07" text-anchor="middle" font-weight="normal" >0.300</text>
<text x="266.53" y="102.22" transform="rotate(0.03 266.53 102.22)" font-size="4.75" fill="#1c763c" stroke="#1c763c" stroke-width="0.07" text-anchor="middle" font-weight="normal" >0.300</text>
<text x="296.25" y="102.22" transform="rotate(0.03 296.25 102.22)" font-size="4.75" fill="#1c763c" stroke="#1c763c" stroke-width="0.07" text-anchor="middle" font-weight="normal" >6.451</text>
<text x="28.86" y="108.39" transform="rotate(0.03 28.86 108.39)" font-size="4.75" fill="#2a2a2a" stroke="#2a2a2a" stroke-width="0.07" text-anchor="middle" font-weight="normal" >2</text>
<text x="58.56" y="108.39" transform="rotate(0.03 58.56 108.39)" font-size="4.75" fill="#2a2a2a" stroke="#2a2a2a" stroke-width="0.07" text-anchor="middle" font-weight="normal" >00:00:02</text>
<text x="88.28" y="108.39" transform="rotate(0.03 88.28 108.39)" font-size="4.75" fill="#2a2a2a" stroke="#2a2a2a" stroke-width="0.07" text-anchor="middle" font-weight="normal" >40.1</text>
<text x="117.98" y="108.39" transform="rotate(0.03 117.98 108.39)" font-size="4.75" fill="#2a2a2a" stroke="#2a2a2a" stroke-width="0.07" text-anchor="middle" font-weight="normal" >0.0120</text>
<text x="147.69" y="108.39" transform="rotate(0.03 147.69 108.39)" font-size="4.75" fill="#2a2a2a" stroke="#2a2a2a" stroke-width="0.07" text-anchor="middle" font-weight="normal" >72.900</text>
<text x="177.41" y="108.39" transform="rotate(0.03 177.41 108.39)" font-size="4.75" fill="#1c763c" stroke="#1c763c" stroke-width="0.07" text-anchor="middle" font-weight="normal" >0.6</text>
<text x="207.12" y="108.39" transform="rotate(0.03 207.12 108.39)" font-size="4.75" fill="#1c763c" stroke="#1c763c" stroke-width="0.07" text-anchor="middle" font-weight="normal" >-0.0010</text>
<text x="236.83" y="108.39" transform="rotate(0.03 236.83 108.39)" font-size="4.75" fill="#1c763c" stroke="#1c763c" stroke-width="0.07" text-anchor="middle" font-weight="normal" >-0.100</text>
<text x="266.53" y="108.39" transform="rotate(0.03 266.53 108.39)" font-size="4.75" fill="#1c763c" stroke="#1c763c" stroke-width="0.07" text-anchor="middle" font-weight="normal" >-0.400</text>
<text x="296.25" y="108.39" transform="rotate(0.03 296.25 108.39)" font-size="4.75" fill="#1c763c" stroke="#1c763c" stroke-width="0.07" text-anchor="middle" font-weight="normal" >6.450</text>
<text x="28.86" y="114.56" transform="rotate(0.03 28.86 114.56)" font-size="4.75" fill="#2a2a2a" stroke="#2a2a2a" stroke-width="0.07" text-anchor="middle" font-weight="normal" >3</text>
<text x="58.56" y="114.56" transform="rotate(0.03 58.56 114.56)" font-size="4.75" fill="#2a2a2a" stroke="#2a2a2a" stroke-width="0.07" text-anchor="middle" font-weight="normal" >00:00:03</text>
<text x="88.28" y="114.56" transform="rotate(0.03 88.28 114.56)" font-size="4.75" fill="#2a2a2a" stroke="#2a2a2a" stroke-width="0.07" text-anchor="middle" font-weight="normal" >39.9</text>
<text x="117.98" y="114.56" transform="rotate(0.03 117.98 114.56)" font-size="4.75" fill="#2a2a2a" stroke="#2a2a2a" stroke-width="0.07" text-anchor="middle" font-weight="normal" >0.0120</text>
<text x="147.69" y="114.56" transform="rotate(0.03 147.69 114.56)" font-size="4.75" fill="#2a2a2a" stroke="#2a2a2a" stroke-width="0.07" text-anchor="middle" font-weight="normal" >73.300</text>
<text x="177.41" y="114.56" transform="rotate(0.03 177.41 114.56)" font-size="4.75" fill="#1c763c" stroke="#1c763c" stroke-width="0.07" text-anchor="middle" font-weight="normal" >0.4</text>
<text x="207.12" y="114.56" transform="rotate(0.03 207.12 114.56)" font-size="4.75" fill="#1c763c" stroke="#1c763c" stroke-width="0.07" text-anchor="middle" font-weight="normal" >-0.0010</text>
<text x="236.83" y="114.56" transform="rotate(0.03 236.83 114.56)" font-size="4.75" fill="#1c763c" stroke="#1c763c" stroke-width="0.07" text-anchor="middle" font-weight="normal" >0.300</text>
<text x="266.53" y="114.56" transform="rotate(0.03 266.53 114.56)" font-size="4.75" fill="#1c763c" stroke="#1c763c" stroke-width="0.07" text-anchor="middle" font-weight="normal" >0.400</text>
<text x="296.25" y="114.56" transform="rotate(0.03 296.25 114.56)" font-size="4.75" fill="#1c763c" stroke="#1c763c" stroke-width="0.07" text-anchor="middle" font-weight="normal" >6.450</text>
<text x="28.86" y="120.73" transform="rotate(0.03 28.86 120.73)" font-size="4.75" fill="#2a2a2a" stroke="#2a2a2a" stroke-width="0.07" text-anchor="middle" font-weight="normal" >4</text>
<text x="58.56" y="120.73" transform="rotate(0.03 58.56 120.73)" font-size="4.75" fill="#2a2a2a" stroke="#2a2a2a" stroke-width="0.07" text-anchor="middle" font-weight="normal" >00:00:04</text>
<text x="88.28" y="120.73" transform="rotate(0.03 88.28 120.73)" font-size="4.75" fill="#2a2a2a" stroke="#2a2a2a" stroke-width="0.07" text-anchor="middle" font-weight="normal" >40.1</text>
<text x="117.98" y="120.73" transform="rotate(0.03 117.98 120.73)" font-size="4.75" fill="#2a2a2a" stroke="#2a2a2a" stroke-width="0.07" text-anchor="middle" font-weight="normal" >0.0120</text>
<text x="147.69" y="120.73" transform="rotate(0.03 147.69 120.73)" font-size="4.75" fill="#2a2a2a" stroke="#2a2a2a" stroke-width="0.07" text-anchor="middle" font-weight="normal" >72.900</text>
<text x="177.41" y="120.73" transform="rotate(0.03 177.41 120.73)" font-size="4.75" fill="#1c763c" stroke="#1c763c" stroke-width="0.07" text-anchor="middle" font-weight="normal" >0.6</text>
<text x="207.12" y="120.73" transform="rotate(0.03 207.12 120.73)" font-size="4.75" fill="#1c763c" stroke="#1c763c" stroke-width="0.07" text-anchor="middle" font-weight="normal" >-0.0010</text>
<text x="236.83" y="120.73" transform="rotate(0.03 236.83 120.73)" font-size="4.75" fill="#1c763c" stroke="#1c763c" stroke-width="0.07" text-anchor="middle" font-weight="normal" >-0.100</text>
<text x="266.53" y="120.73" transform="rotate(0.03 266.53 120.73)" font-size="4.75" fill="#1c763c" stroke="#1c763c" stroke-width="0.07" text-anchor="middle" font-weight="normal" >-0.400</text>
<text x="296.25" y="120.73" transform="rotate(0.03 296.25 120.73)" font-size="4.75" fill="#1c763c" stroke="#1c763c" stroke-width="0.07" text-anchor="middle" font-weight="normal" >6.450</text>
<text x="28.86" y="126.90" transform="rotate(0.03 28.86 126.90)" font-size="4.75" fill="#2a2a2a" stroke="#2a2a2a" stroke-width="0.07" text-anchor="middle" font-weight="normal" >5</text>
<text x="58.56" y="126.90" transform="rotate(0.03 58.56 126.90)" font-size="4.75" fill="#2a2a2a" stroke="#2a2a2a" stroke-width="0.07" text-anchor="middle" font-weight="normal" >00:00:05</text>
<text x="88.28" y="126.90" transform="rotate(0.03 88.28 126.90)" font-size="4.75" fill="#2a2a2a" stroke="#2a2a2a" stroke-width="0.07" text-anchor="middle" font-weight="normal" >40.4</text>
<text x="117.98" y="126.90" transform="rotate(0.03 117.98 126.90)" font-size="4.75" fill="#2a2a2a" stroke="#2a2a2a" stroke-width="0.07" text-anchor="middle" font-weight="normal" >0.0120</text>
<text x="147.69" y="126.90" transform="rotate(0.03 147.69 126.90)" font-size="4.75" fill="#2a2a2a" stroke="#2a2a2a" stroke-width="0.07" text-anchor="middle" font-weight="normal" >73.300</text>
<text x="177.41" y="126.90" transform="rotate(0.03 177.41 126.90)" font-size="4.75" fill="#1c763c" stroke="#1c763c" stroke-width="0.07" text-anchor="middle" font-weight="normal" >0.9</text>
<text x="207.12" y="126.90" transform="rotate(0.03 207.12 126.90)" font-size="4.75" fill="#1c763c" stroke="#1c763c" stroke-width="0.07" text-anchor="middle" font-weight="normal" >-0.0010</text>
<text x="236.83" y="126.90" transform="rotate(0.03 236.83 126.90)" font-size="4.75" fill="#1c763c" stroke="#1c763c" stroke-width="0.07" text-anchor="middle" font-weight="normal" >0.300</text>
<text x="266.53" y="126.90" transform="rotate(0.03 266.53 126.90)" font-size="4.75" fill="#1c763c" stroke="#1c763c" stroke-width="0.07" text-anchor="middle" font-weight="normal" >0.400</text>
<text x="296.25" y="126.90" transform="rotate(0.03 296.25 126.90)" font-size="4.75" fill="#1c763c" stroke="#1c763c" stroke-width="0.07" text-anchor="middle" font-weight="normal" >6.450</text>
<text x="28.86" y="133.07" transform="rotate(0.03 28.86 133.07)" font-size="4.75" fill="#2a2a2a" stroke="#2a2a2a" stroke-width="0.07" text-anchor="middle" font-weight="normal" >6</text>
<text x="58.56" y="133.07" transform="rotate(0.03 58.56 133.07)" font-size="4.75" fill="#2a2a2a" stroke="#2a2a2a" stroke-width="0.07" text-anchor="middle" font-weight="normal" >00:00:06</text>
<text x="88.28" y="133.07" transform="rotate(0.03 88.28 133.07)" font-size="4.75" fill="#2a2a2a" stroke="#2a2a2a" stroke-width="0.07" text-anchor="middle" font-weight="normal" >40.6</text>
<text x="117.98" y="133.07" transform="rotate(0.03 117.98 133.07)" font-size="4.75" fill="#2a2a2a" stroke="#2a2a2a" stroke-width="0.07" text-anchor="middle" font-weight="normal" >0.0120</text>
<text x="147.69" y="133.07" transform="rotate(0.03 147.69 133.07)" font-size="4.75" fill="#2a2a2a" stroke="#2a2a2a" stroke-width="0.07" text-anchor="middle" font-weight="normal" >72.900</text>
<text x="177.41" y="133.07" transform="rotate(0.03 177.41 133.07)" font-size="4.75" fill="#1c763c" stroke="#1c763c" stroke-width="0.07" text-anchor="middle" font-weight="normal" >1.1</text>
<text x="207.12" y="133.07" transform="rotate(0.03 207.12 133.07)" font-size="4.75" fill="#1c763c" stroke="#1c763c" stroke-width="0.07" text-anchor="middle" font-weight="normal" >-0.0010</text>
<text x="236.83" y="133.07" transform="rotate(0.03 236.83 133.07)" font-size="4.75" fill="#1c763c" stroke="#1c763c" stroke-width="0.07" text-anchor="middle" font-weight="normal" >-0.100</text>
<text x="266.53" y="133.07" transform="rotate(0.03 266.53 133.07)" font-size="4.75" fill="#1c763c" stroke="#1c763c" stroke-width="0.07" text-anchor="middle" font-weight="normal" >-0.400</text>
<text x="296.25" y="133.07" transform="rotate(0.03 296.25 133.07)" font-size="4.75" fill="#1c763c" stroke="#1c763c" stroke-width="0.07" text-anchor="middle" font-weight="normal" >6.450</text>
<text x="28.86" y="139.24" transform="rotate(0.03 28.86 139.24)" font-size="4.75" fill="#2a2a2a" stroke="#2a2a2a" stroke-width="0.07" text-anchor="middle" font-weight="normal" >7</text>
<text x="58.56" y="139.24" transform="rotate(0.03 58.56 139.24)" font-size="4.75" fill="#2a2a2a" stroke="#2a2a2a" stroke-width="0.07" text-anchor="middle" font-weight="normal" >00:00:12</text>
<text x="88.28" y="139.24" transform="rotate(0.03 88.28 139.24)" font-size="4.75" fill="#2a2a2a" stroke="#2a2a2a" stroke-width="0.07" text-anchor="middle" font-weight="normal" >41.7</text>
<text x="117.98" y="139.24" transform="rotate(0.03 117.98 139.24)" font-size="4.75" fill="#2a2a2a" stroke="#2a2a2a" stroke-width="0.07" text-anchor="middle" font-weight="normal" >0.0120</text>
<text x="147.69" y="139.24" transform="rotate(0.03 147.69 139.24)" font-size="4.75" fill="#2a2a2a" stroke="#2a2a2a" stroke-width="0.07" text-anchor="middle" font-weight="normal" >72.900</text>
<text x="177.41" y="139.24" transform="rotate(0.03 177.41 139.24)" font-size="4.75" fill="#1c763c" stroke="#1c763c" stroke-width="0.07" text-anchor="middle" font-weight="normal" >2.2</text>
<text x="207.12" y="139.24" transform="rotate(0.03 207.12 139.24)" font-size="4.75" fill="#1c763c" stroke="#1c763c" stroke-width="0.07" text-anchor="middle" font-weight="normal" >-0.0010</text>
<text x="236.83" y="139.24" transform="rotate(0.03 236.83 139.24)" font-size="4.75" fill="#1c763c" stroke="#1c763c" stroke-width="0.07" text-anchor="middle" font-weight="normal" >-0.100</text>
<text x="266.53" y="139.24" transform="rotate(0.03 266.53 139.24)" font-size="4.75" fill="#1c763c" stroke="#1c763c" stroke-width="0.07" text-anchor="middle" font-weight="normal" >0.000</text>
<text x="296.25" y="139.24" transform="rotate(0.03 296.25 139.24)" font-size="4.75" fill="#1c763c" stroke="#1c763c" stroke-width="0.07" text-anchor="middle" font-weight="normal" >6.450</text>
<text x="28.86" y="145.41" transform="rotate(0.03 28.86 145.41)" font-size="4.75" fill="#2a2a2a" stroke="#2a2a2a" stroke-width="0.07" text-anchor="middle" font-weight="normal" >8</text>
<text x="58.56" y="145.41" transform="rotate(0.03 58.56 145.41)" font-size="4.75" fill="#2a2a2a" stroke="#2a2a2a" stroke-width="0.07" text-anchor="middle" font-weight="normal" >00:00:15</text>
<text x="88.28" y="145.41" transform="rotate(0.03 88.28 145.41)" font-size="4.75" fill="#2a2a2a" stroke="#2a2a2a" stroke-width="0.07" text-anchor="middle" font-weight="normal" >42.0</text>
<text x="117.98" y="145.41" transform="rotate(0.03 117.98 145.41)" font-size="4.75" fill="#2a2a2a" stroke="#2a2a2a" stroke-width="0.07" text-anchor="middle" font-weight="normal" >0.0130</text>
<text x="147.69" y="145.41" transform="rotate(0.03 147.69 145.41)" font-size="4.75" fill="#2a2a2a" stroke="#2a2a2a" stroke-width="0.07" text-anchor="middle" font-weight="normal" >73.300</text>
<text x="177.41" y="145.41" transform="rotate(0.03 177.41 145.41)" font-size="4.75" fill="#1c763c" stroke="#1c763c" stroke-width="0.07" text-anchor="middle" font-weight="normal" >2.5</text>
<text x="207.12" y="145.41" transform="rotate(0.03 207.12 145.41)" font-size="4.75" fill="#1c763c" stroke="#1c763c" stroke-width="0.07" text-anchor="middle" font-weight="normal" >0.0000</text>
<text x="236.83" y="145.41" transform="rotate(0.03 236.83 145.41)" font-size="4.75" fill="#1c763c" stroke="#1c763c" stroke-width="0.07" text-anchor="middle" font-weight="normal" >0.300</text>
<text x="266.53" y="145.41" transform="rotate(0.03 266.53 145.41)" font-size="4.75" fill="#1c763c" stroke="#1c763c" stroke-width="0.07" text-anchor="middle" font-weight="normal" >0.400</text>
<text x="296.25" y="145.41" transform="rotate(0.03 296.25 145.41)" font-size="4.75" fill="#1c763c" stroke="#1c763c" stroke-width="0.07" text-anchor="middle" font-weight="normal" >6.451</text>
<text x="28.86" y="151.58" transform="rotate(0.03 28.86 151.58)" font-size="4.75" fill="#2a2a2a" stroke="#2a2a2a" stroke-width="0.07" text-anchor="middle" font-weight="normal" >9</text>
<text x="58.56" y="151.58" transform="rotate(0.03 58.56 151.58)" font-size="4.75" fill="#2a2a2a" stroke="#2a2a2a" stroke-width="0.07" text-anchor="middle" font-weight="normal" >00:00:30</text>
<text x="88.28" y="151.58" transform="rotate(0.03 88.28 151.58)" font-size="4.75" fill="#2a2a2a" stroke="#2a2a2a" stroke-width="0.07" text-anchor="middle" font-weight="normal" >44.0</text>
<text x="117.98" y="151.58" transform="rotate(0.03 117.98 151.58)" font-size="4.75" fill="#2a2a2a" stroke="#2a2a2a" stroke-width="0.07" text-anchor="middle" font-weight="normal" >0.0130</text>
<text x="147.69" y="151.58" transform="rotate(0.03 147.69 151.58)" font-size="4.75" fill="#2a2a2a" stroke="#2a2a2a" stroke-width="0.07" text-anchor="middle" font-weight="normal" >73.000</text>
<text x="177.41" y="151.58" transform="rotate(0.03 177.41 151.58)" font-size="4.75" fill="#1c763c" stroke="#1c763c" stroke-width="0.07" text-anchor="middle" font-weight="normal" >4.5</text>
<text x="207.12" y="151.58" transform="rotate(0.03 207.12 151.58)" font-size="4.75" fill="#1c763c" stroke="#1c763c" stroke-width="0.07" text-anchor="middle" font-weight="normal" >0.0000</text>
<text x="236.83" y="151.58" transform="rotate(0.03 236.83 151.58)" font-size="4.75" fill="#1c763c" stroke="#1c763c" stroke-width="0.07" text-anchor="middle" font-weight="normal" >0.000</text>
<text x="266.53" y="151.58" transform="rotate(0.03 266.53 151.58)" font-size="4.75" fill="#1c763c" stroke="#1c763c" stroke-width="0.07" text-anchor="middle" font-weight="normal" >-0.300</text>
<text x="296.25" y="151.58" transform="rotate(0.03 296.25 151.58)" font-size="4.75" fill="#1c763c" stroke="#1c763c" stroke-width="0.07" text-anchor="middle" font-weight="normal" >6.451</text>
<text x="28.86" y="157.75" transform="rotate(0.03 28.86 157.75)" font-size="4.75" fill="#2a2a2a" stroke="#2a2a2a" stroke-width="0.07" text-anchor="middle" font-weight="normal" >10</text>
<text x="58.56" y="157.75" transform="rotate(0.03 58.56 157.75)" font-size="4.75" fill="#2a2a2a" stroke="#2a2a2a" stroke-width="0.07" text-anchor="middle" font-weight="normal" >00:01:00</text>
<text x="88.28" y="157.75" transform="rotate(0.03 88.28 157.75)" font-size="4.75" fill="#2a2a2a" stroke="#2a2a2a" stroke-width="0.07" text-anchor="middle" font-weight="normal" >47.8</text>
<text x="117.98" y="157.75" transform="rotate(0.03 117.98 157.75)" font-size="4.75" fill="#2a2a2a" stroke="#2a2a2a" stroke-width="0.07" text-anchor="middle" font-weight="normal" >0.0130</text>
<text x="147.69" y="157.75" transform="rotate(0.03 147.69 157.75)" font-size="4.75" fill="#2a2a2a" stroke="#2a2a2a" stroke-width="0.07" text-anchor="middle" font-weight="normal" >73.100</text>
<text x="177.41" y="157.75" transform="rotate(0.03 177.41 157.75)" font-size="4.75" fill="#1c763c" stroke="#1c763c" stroke-width="0.07" text-anchor="middle" font-weight="normal" >8.3</text>
<text x="207.12" y="157.75" transform="rotate(0.03 207.12 157.75)" font-size="4.75" fill="#1c763c" stroke="#1c763c" stroke-width="0.07" text-anchor="middle" font-weight="normal" >0.0000</text>
<text x="236.83" y="157.75" transform="rotate(0.03 236.83 157.75)" font-size="4.75" fill="#1c763c" stroke="#1c763c" stroke-width="0.07" text-anchor="middle" font-weight="normal" >0.100</text>
<text x="266.53" y="157.75" transform="rotate(0.03 266.53 157.75)" font-size="4.75" fill="#1c763c" stroke="#1c763c" stroke-width="0.07" text-anchor="middle" font-weight="normal" >0.100</text>
<text x="296.25" y="157.75" transform="rotate(0.03 296.25 157.75)" font-size="4.75" fill="#1c763c" stroke="#1c763c" stroke-width="0.07" text-anchor="middle" font-weight="normal" >6.451</text>
<text x="28.86" y="163.92" transform="rotate(0.03 28.86 163.92)" font-size="4.75" fill="#2a2a2a" stroke="#2a2a2a" stroke-width="0.07" text-anchor="middle" font-weight="normal" >11</text>
<text x="58.56" y="163.92" transform="rotate(0.03 58.56 163.92)" font-size="4.75" fill="#2a2a2a" stroke="#2a2a2a" stroke-width="0.07" text-anchor="middle" font-weight="normal" >00:02:00</text>
<text x="88.28" y="163.92" transform="rotate(0.03 88.28 163.92)" font-size="4.75" fill="#2a2a2a" stroke="#2a2a2a" stroke-width="0.07" text-anchor="middle" font-weight="normal" >53.3</text>
<text x="117.98" y="163.92" transform="rotate(0.03 117.98 163.92)" font-size="4.75" fill="#2a2a2a" stroke="#2a2a2a" stroke-width="0.07" text-anchor="middle" font-weight="normal" >0.0150</text>
<text x="147.69" y="163.92" transform="rotate(0.03 147.69 163.92)" font-size="4.75" fill="#2a2a2a" stroke="#2a2a2a" stroke-width="0.07" text-anchor="middle" font-weight="normal" >73.300</text>
<text x="177.41" y="163.92" transform="rotate(0.03 177.41 163.92)" font-size="4.75" fill="#1c763c" stroke="#1c763c" stroke-width="0.07" text-anchor="middle" font-weight="normal" >13.8</text>
<text x="207.12" y="163.92" transform="rotate(0.03 207.12 163.92)" font-size="4.75" fill="#1c763c" stroke="#1c763c" stroke-width="0.07" text-anchor="middle" font-weight="normal" >0.0020</text>
<text x="236.83" y="163.92" transform="rotate(0.03 236.83 163.92)" font-size="4.75" fill="#1c763c" stroke="#1c763c" stroke-width="0.07" text-anchor="middle" font-weight="normal" >0.300</text>
<text x="266.53" y="163.92" transform="rotate(0.03 266.53 163.92)" font-size="4.75" fill="#1c763c" stroke="#1c763c" stroke-width="0.07" text-anchor="middle" font-weight="normal" >0.200</text>
<text x="296.25" y="163.92" transform="rotate(0.03 296.25 163.92)" font-size="4.75" fill="#1c763c" stroke="#1c763c" stroke-width="0.07" text-anchor="middle" font-weight="normal" >6.453</text>
<text x="28.86" y="170.09" transform="rotate(0.03 28.86 170.09)" font-size="4.75" fill="#2a2a2a" stroke="#2a2a2a" stroke-width="0.07" text-anchor="middle" font-weight="normal" >12</text>
<text x="58.56" y="170.09" transform="rotate(0.03 58.56 170.09)" font-size="4.75" fill="#2a2a2a" stroke="#2a2a2a" stroke-width="0.07" text-anchor="middle" font-weight="normal" >00:04:00</text>
<text x="88.28" y="170.09" transform="rotate(0.03 88.28 170.09)" font-size="4.75" fill="#2a2a2a" stroke="#2a2a2a" stroke-width="0.07" text-anchor="middle" font-weight="normal" >60.4</text>
<text x="117.98" y="170.09" transform="rotate(0.03 117.98 170.09)" font-size="4.75" fill="#2a2a2a" stroke="#2a2a2a" stroke-width="0.07" text-anchor="middle" font-weight="normal" >0.0160</text>
<text x="147.69" y="170.09" transform="rotate(0.03 147.69 170.09)" font-size="4.75" fill="#2a2a2a" stroke="#2a2a2a" stroke-width="0.07" text-anchor="middle" font-weight="normal" >73.700</text>
<text x="177.41" y="170.09" transform="rotate(0.03 177.41 170.09)" font-size="4.75" fill="#1c763c" stroke="#1c763c" stroke-width="0.07" text-anchor="middle" font-weight="normal" >20.9</text>
<text x="207.12" y="170.09" transform="rotate(0.03 207.12 170.09)" font-size="4.75" fill="#1c763c" stroke="#1c763c" stroke-width="0.07" text-anchor="middle" font-weight="normal" >0.0030</text>
<text x="236.83" y="170.09" transform="rotate(0.03 236.83 170.09)" font-size="4.75" fill="#1c763c" stroke="#1c763c" stroke-width="0.07" text-anchor="middle" font-weight="normal" >0.700</text>
<text x="266.53" y="170.09" transform="rotate(0.03 266.53 170.09)" font-size="4.75" fill="#1c763c" stroke="#1c763c" stroke-width="0.07" text-anchor="middle" font-weight="normal" >0.400</text>
<text x="296.25" y="170.09" transform="rotate(0.03 296.25 170.09)" font-size="4.75" fill="#1c763c" stroke="#1c763c" stroke-width="0.07" text-anchor="middle" font-weight="normal" >6.455</text>
<text x="28.86" y="176.26" transform="rotate(0.03 28.86 176.26)" font-size="4.75" fill="#2a2a2a" stroke="#2a2a2a" stroke-width="0.07" text-anchor="middle" font-weight="normal" >13</text>
<text x="58.56" y="176.26" transform="rotate(0.03 58.56 176.26)" font-size="4.75" fill="#2a2a2a" stroke="#2a2a2a" stroke-width="0.07" text-anchor="middle" font-weight="normal" >00:08:00</text>
<text x="88.28" y="176.26" transform="rotate(0.03 88.28 176.26)" font-size="4.75" fill="#2a2a2a" stroke="#2a2a2a" stroke-width="0.07" text-anchor="middle" font-weight="normal" >69.4</text>
<text x="117.98" y="176.26" transform="rotate(0.03 117.98 176.26)" font-size="4.75" fill="#2a2a2a" stroke="#2a2a2a" stroke-width="0.07" text-anchor="middle" font-weight="normal" >0.0200</text>
<text x="147.69" y="176.26" transform="rotate(0.03 147.69 176.26)" font-size="4.75" fill="#2a2a2a" stroke="#2a2a2a" stroke-width="0.07" text-anchor="middle" font-weight="normal" >74.400</text>
<text x="177.41" y="176.26" transform="rotate(0.03 177.41 176.26)" font-size="4.75" fill="#1c763c" stroke="#1c763c" stroke-width="0.07" text-anchor="middle" font-weight="normal" >29.9</text>
<text x="207.12" y="176.26" transform="rotate(0.03 207.12 176.26)" font-size="4.75" fill="#1c763c" stroke="#1c763c" stroke-width="0.07" text-anchor="middle" font-weight="normal" >0.0070</text>
<text x="236.83" y="176.26" transform="rotate(0.03 236.83 176.26)" font-size="4.75" fill="#1c763c" stroke="#1c763c" stroke-width="0.07" text-anchor="middle" font-weight="normal" >1.400</text>
<text x="266.53" y="176.26" transform="rotate(0.03 266.53 176.26)" font-size="4.75" fill="#1c763c" stroke="#1c763c" stroke-width="0.07" text-anchor="middle" font-weight="normal" >0.700</text>
<text x="296.25" y="176.26" transform="rotate(0.03 296.25 176.26)" font-size="4.75" fill="#1c763c" stroke="#1c763c" stroke-width="0.07" text-anchor="middle" font-weight="normal" >6.459</text>
<text x="28.86" y="182.43" transform="rotate(0.03 28.86 182.43)" font-size="4.75" fill="#2a2a2a" stroke="#2a2a2a" stroke-width="0.07" text-anchor="middle" font-weight="normal" >14</text>
<text x="58.56" y="182.43" transform="rotate(0.03 58.56 182.43)" font-size="4.75" fill="#2a2a2a" stroke="#2a2a2a" stroke-width="0.07" text-anchor="middle" font-weight="normal" >00:10:00</text>
<text x="88.28" y="182.43" transform="rotate(0.03 88.28 182.43)" font-size="4.75" fill="#2a2a2a" stroke="#2a2a2a" stroke-width="0.07" text-anchor="middle" font-weight="normal" >73.2</text>
<text x="117.98" y="182.43" transform="rotate(0.03 117.98 182.43)" font-size="4.75" fill="#2a2a2a" stroke="#2a2a2a" stroke-width="0.07" text-anchor="middle" font-weight="normal" >0.0220</text>
<text x="147.69" y="182.43" transform="rotate(0.03 147.69 182.43)" font-size="4.75" fill="#2a2a2a" stroke="#2a2a2a" stroke-width="0.07" text-anchor="middle" font-weight="normal" >74.500</text>
<text x="177.41" y="182.43" transform="rotate(0.03 177.41 182.43)" font-size="4.75" fill="#1c763c" stroke="#1c763c" stroke-width="0.07" text-anchor="middle" font-weight="normal" >33.7</text>
<text x="207.12" y="182.43" transform="rotate(0.03 207.12 182.43)" font-size="4.75" fill="#1c763c" stroke="#1c763c" stroke-width="0.07" text-anchor="middle" font-weight="normal" >0.0090</text>
<text x="236.83" y="182.43" transform="rotate(0.03 236.83 182.43)" font-size="4.75" fill="#1c763c" stroke="#1c763c" stroke-width="0.07" text-anchor="middle" font-weight="normal" >1.500</text>
<text x="266.53" y="182.43" transform="rotate(0.03 266.53 182.43)" font-size="4.75" fill="#1c763c" stroke="#1c763c" stroke-width="0.07" text-anchor="middle" font-weight="normal" >0.100</text>
<text x="296.25" y="182.43" transform="rotate(0.03 296.25 182.43)" font-size="4.75" fill="#1c763c" stroke="#1c763c" stroke-width="0.07" text-anchor="middle" font-weight="normal" >6.461</text>
<text x="28.86" y="188.60" transform="rotate(0.03 28.86 188.60)" font-size="4.75" fill="#2a2a2a" stroke="#2a2a2a" stroke-width="0.07" text-anchor="middle" font-weight="normal" >15</text>
<text x="58.56" y="188.60" transform="rotate(0.03 58.56 188.60)" font-size="4.75" fill="#2a2a2a" stroke="#2a2a2a" stroke-width="0.07" text-anchor="middle" font-weight="normal" >00:14:59</text>
<text x="88.28" y="188.60" transform="rotate(0.03 88.28 188.60)" font-size="4.75" fill="#2a2a2a" stroke="#2a2a2a" stroke-width="0.07" text-anchor="middle" font-weight="normal" >81.6</text>
<text x="117.98" y="188.60" transform="rotate(0.03 117.98 188.60)" font-size="4.75" fill="#2a2a2a" stroke="#2a2a2a" stroke-width="0.07" text-anchor="middle" font-weight="normal" >0.0280</text>
<text x="147.69" y="188.60" transform="rotate(0.03 147.69 188.60)" font-size="4.75" fill="#2a2a2a" stroke="#2a2a2a" stroke-width="0.07" text-anchor="middle" font-weight="normal" >74.600</text>
<text x="177.41" y="188.60" transform="rotate(0.03 177.41 188.60)" font-size="4.75" fill="#1c763c" stroke="#1c763c" stroke-width="0.07" text-anchor="middle" font-weight="normal" >42.1</text>
<text x="207.12" y="188.60" transform="rotate(0.03 207.12 188.60)" font-size="4.75" fill="#1c763c" stroke="#1c763c" stroke-width="0.07" text-anchor="middle" font-weight="normal" >0.0150</text>
<text x="236.83" y="188.60" transform="rotate(0.03 236.83 188.60)" font-size="4.75" fill="#1c763c" stroke="#1c763c" stroke-width="0.07" text-anchor="middle" font-weight="normal" >1.600</text>
<text x="266.53" y="188.60" transform="rotate(0.03 266.53 188.60)" font-size="4.75" fill="#1c763c" stroke="#1c763c" stroke-width="0.07" text-anchor="middle" font-weight="normal" >0.100</text>
<text x="296.25" y="188.60" transform="rotate(0.03 296.25 188.60)" font-size="4.75" fill="#1c763c" stroke="#1c763c" stroke-width="0.07" text-anchor="middle" font-weight="normal" >6.468</text>
<text x="28.86" y="194.77" transform="rotate(0.03 28.86 194.77)" font-size="4.75" fill="#2a2a2a" stroke="#2a2a2a" stroke-width="0.07" text-anchor="middle" font-weight="normal" >16</text>
<text x="58.56" y="194.77" transform="rotate(0.03 58.56 194.77)" font-size="4.75" fill="#2a2a2a" stroke="#2a2a2a" stroke-width="0.07" text-anchor="middle" font-weight="normal" >00:29:59</text>
<text x="88.28" y="194.77" transform="rotate(0.03 88.28 194.77)" font-size="4.75" fill="#2a2a2a" stroke="#2a2a2a" stroke-width="0.07" text-anchor="middle" font-weight="normal" >103.5</text>
<text x="117.98" y="194.77" transform="rotate(0.03 117.98 194.77)" font-size="4.75" fill="#2a2a2a" stroke="#2a2a2a" stroke-width="0.07" text-anchor="middle" font-weight="normal" >0.0420</text>
<text x="147.69" y="194.77" transform="rotate(0.03 147.69 194.77)" font-size="4.75" fill="#2a2a2a" stroke="#2a2a2a" stroke-width="0.07" text-anchor="middle" font-weight="normal" >74.600</text>
<text x="177.41" y="194.77" transform="rotate(0.03 177.41 194.77)" font-size="4.75" fill="#1c763c" stroke="#1c763c" stroke-width="0.07" text-anchor="middle" font-weight="normal" >64.0</text>
<text x="207.12" y="194.77" transform="rotate(0.03 207.12 194.77)" font-size="4.75" fill="#1c763c" stroke="#1c763c" stroke-width="0.07" text-anchor="middle" font-weight="normal" >0.0290</text>
<text x="236.83" y="194.77" transform="rotate(0.03 236.83 194.77)" font-size="4.75" fill="#1c763c" stroke="#1c763c" stroke-width="0.07" text-anchor="middle" font-weight="normal" >1.600</text>
<text x="266.53" y="194.77" transform="rotate(0.03 266.53 194.77)" font-size="4.75" fill="#1c763c" stroke="#1c763c" stroke-width="0.07" text-anchor="middle" font-weight="normal" >0.000</text>
<text x="296.25" y="194.77" transform="rotate(0.03 296.25 194.77)" font-size="4.75" fill="#1c763c" stroke="#1c763c" stroke-width="0.07" text-anchor="middle" font-weight="normal" >6.483</text>
<text x="28.86" y="200.94" transform="rotate(0.03 28.86 200.94)" font-size="4.75" fill="#2a2a2a" stroke="#2a2a2a" stroke-width="0.07" text-anchor="middle" font-weight="normal" >17</text>
<text x="58.56" y="200.94" transform="rotate(0.03 58.56 200.94)" font-size="4.75" fill="#2a2a2a" stroke="#2a2a2a" stroke-width="0.07" text-anchor="middle" font-weight="normal" >00:44:56</text>
<text x="88.28" y="200.94" transform="rotate(0.03 88.28 200.94)" font-size="4.75" fill="#2a2a2a" stroke="#2a2a2a" stroke-width="0.07" text-anchor="middle" font-weight="normal" >122.0</text>
<text x="117.98" y="200.94" transform="rotate(0.03 117.98 200.94)" font-size="4.75" fill="#2a2a2a" stroke="#2a2a2a" stroke-width="0.07" text-anchor="middle" font-weight="normal" >0.0560</text>
<text x="147.69" y="200.94" transform="rotate(0.03 147.69 200.94)" font-size="4.75" fill="#2a2a2a" stroke="#2a2a2a" stroke-width="0.07" text-anchor="middle" font-weight="normal" >74.000</text>
<text x="177.41" y="200.94" transform="rotate(0.03 177.41 200.94)" font-size="4.75" fill="#1c763c" stroke="#1c763c" stroke-width="0.07" text-anchor="middle" font-weight="normal" >82.5</text>
<text x="207.12" y="200.94" transform="rotate(0.03 207.12 200.94)" font-size="4.75" fill="#1c763c" stroke="#1c763c" stroke-width="0.07" text-anchor="middle" font-weight="normal" >0.0430</text>
<text x="236.83" y="200.94" transform="rotate(0.03 236.83 200.94)" font-size="4.75" fill="#1c763c" stroke="#1c763c" stroke-width="0.07" text-anchor="middle" font-weight="normal" >1.000</text>
<text x="266.53" y="200.94" transform="rotate(0.03 266.53 200.94)" font-size="4.75" fill="#1c763c" stroke="#1c763c" stroke-width="0.07" text-anchor="middle" font-weight="normal" >-0.600</text>
<text x="296.25" y="200.94" transform="rotate(0.03 296.25 200.94)" font-size="4.75" fill="#1c763c" stroke="#1c763c" stroke-width="0.07" text-anchor="middle" font-weight="normal" >6.499</text>
<text x="28.86" y="207.11" transform="rotate(0.03 28.86 207.11)" font-size="4.75" fill="#2a2a2a" stroke="#2a2a2a" stroke-width="0.07" text-anchor="middle" font-weight="normal" >18</text>
<text x="58.56" y="207.11" transform="rotate(0.03 58.56 207.11)" font-size="4.75" fill="#2a2a2a" stroke="#2a2a2a" stroke-width="0.07" text-anchor="middle" font-weight="normal" >00:59:57</text>
<text x="88.28" y="207.11" transform="rotate(0.03 88.28 207.11)" font-size="4.75" fill="#2a2a2a" stroke="#2a2a2a" stroke-width="0.07" text-anchor="middle" font-weight="normal" >138.9</text>
<text x="117.98" y="207.11" transform="rotate(0.03 117.98 207.11)" font-size="4.75" fill="#2a2a2a" stroke="#2a2a2a" stroke-width="0.07" text-anchor="middle" font-weight="normal" >0.0710</text>
<text x="147.69" y="207.11" transform="rotate(0.03 147.69 207.11)" font-size="4.75" fill="#2a2a2a" stroke="#2a2a2a" stroke-width="0.07" text-anchor="middle" font-weight="normal" >74.000</text>
<text x="177.41" y="207.11" transform="rotate(0.03 177.41 207.11)" font-size="4.75" fill="#1c763c" stroke="#1c763c" stroke-width="0.07" text-anchor="middle" font-weight="normal" >99.4</text>
<text x="207.12" y="207.11" transform="rotate(0.03 207.12 207.11)" font-size="4.75" fill="#1c763c" stroke="#1c763c" stroke-width="0.07" text-anchor="middle" font-weight="normal" >0.0580</text>
<text x="236.83" y="207.11" transform="rotate(0.03 236.83 207.11)" font-size="4.75" fill="#1c763c" stroke="#1c763c" stroke-width="0.07" text-anchor="middle" font-weight="normal" >1.000</text>
<text x="266.53" y="207.11" transform="rotate(0.03 266.53 207.11)" font-size="4.75" fill="#1c763c" stroke="#1c763c" stroke-width="0.07" text-anchor="middle" font-weight="normal" >0.000</text>
<text x="296.25" y="207.11" transform="rotate(0.03 296.25 207.11)" font-size="4.75" fill="#1c763c" stroke="#1c763c" stroke-width="0.07" text-anchor="middle" font-weight="normal" >6.516</text>
<text x="28.86" y="213.28" transform="rotate(0.03 28.86 213.28)" font-size="4.75" fill="#2a2a2a" stroke="#2a2a2a" stroke-width="0.07" text-anchor="middle" font-weight="normal" >19</text>
<text x="58.56" y="213.28" transform="rotate(0.03 58.56 213.28)" font-size="4.75" fill="#2a2a2a" stroke="#2a2a2a" stroke-width="0.07" text-anchor="middle" font-weight="normal" >01:14:57</text>
<text x="88.28" y="213.28" transform="rotate(0.03 88.28 213.28)" font-size="4.75" fill="#2a2a2a" stroke="#2a2a2a" stroke-width="0.07" text-anchor="middle" font-weight="normal" >154.4</text>
<text x="117.98" y="213.28" transform="rotate(0.03 117.98 213.28)" font-size="4.75" fill="#2a2a2a" stroke="#2a2a2a" stroke-width="0.07" text-anchor="middle" font-weight="normal" >0.0880</text>
<text x="147.69" y="213.28" transform="rotate(0.03 147.69 213.28)" font-size="4.75" fill="#2a2a2a" stroke="#2a2a2a" stroke-width="0.07" text-anchor="middle" font-weight="normal" >73.200</text>
<text x="177.41" y="213.28" transform="rotate(0.03 177.41 213.28)" font-size="4.75" fill="#1c763c" stroke="#1c763c" stroke-width="0.07" text-anchor="middle" font-weight="normal" >114.9</text>
<text x="207.12" y="213.28" transform="rotate(0.03 207.12 213.28)" font-size="4.75" fill="#1c763c" stroke="#1c763c" stroke-width="0.07" text-anchor="middle" font-weight="normal" >0.0730</text>
<text x="236.83" y="213.28" transform="rotate(0.03 236.83 213.28)" font-size="4.75" fill="#1c763c" stroke="#1c763c" stroke-width="0.07" text-anchor="middle" font-weight="normal" >0.200</text>
<text x="266.53" y="213.28" transform="rotate(0.03 266.53 213.28)" font-size="4.75" fill="#1c763c" stroke="#1c763c" stroke-width="0.07" text-anchor="middle" font-weight="normal" >-0.800</text>
<text x="296.25" y="213.28" transform="rotate(0.03 296.25 213.28)" font-size="4.75" fill="#1c763c" stroke="#1c763c" stroke-width="0.07" text-anchor="middle" font-weight="normal" >6.533</text>
<text x="28.86" y="219.45" transform="rotate(0.03 28.86 219.45)" font-size="4.75" fill="#2a2a2a" stroke="#2a2a2a" stroke-width="0.07" text-anchor="middle" font-weight="normal" >20</text>
<text x="58.56" y="219.45" transform="rotate(0.03 58.56 219.45)" font-size="4.75" fill="#2a2a2a" stroke="#2a2a2a" stroke-width="0.07" text-anchor="middle" font-weight="normal" >01:29:56</text>
<text x="88.28" y="219.45" transform="rotate(0.03 88.28 219.45)" font-size="4.75" fill="#2a2a2a" stroke="#2a2a2a" stroke-width="0.07" text-anchor="middle" font-weight="normal" >169.3</text>
<text x="117.98" y="219.45" transform="rotate(0.03 117.98 219.45)" font-size="4.75" fill="#2a2a2a" stroke="#2a2a2a" stroke-width="0.07" text-anchor="middle" font-weight="normal" >0.1010</text>
<text x="147.69" y="219.45" transform="rotate(0.03 147.69 219.45)" font-size="4.75" fill="#2a2a2a" stroke="#2a2a2a" stroke-width="0.07" text-anchor="middle" font-weight="normal" >73.000</text>
<text x="177.41" y="219.45" transform="rotate(0.03 177.41 219.45)" font-size="4.75" fill="#1c763c" stroke="#1c763c" stroke-width="0.07" text-anchor="middle" font-weight="normal" >129.8</text>
<text x="207.12" y="219.45" transform="rotate(0.03 207.12 219.45)" font-size="4.75" fill="#1c763c" stroke="#1c763c" stroke-width="0.07" text-anchor="middle" font-weight="normal" >0.0880</text>
<text x="236.83" y="219.45" transform="rotate(0.03 236.83 219.45)" font-size="4.75" fill="#1c763c" stroke="#1c763c" stroke-width="0.07" text-anchor="middle" font-weight="normal" >0.000</text>
<text x="266.53" y="219.45" transform="rotate(0.03 266.53 219.45)" font-size="4.75" fill="#1c763c" stroke="#1c763c" stroke-width="0.07" text-anchor="middle" font-weight="normal" >-0.200</text>
<text x="296.25" y="219.45" transform="rotate(0.03 296.25 219.45)" font-size="4.75" fill="#1c763c" stroke="#1c763c" stroke-width="0.07" text-anchor="middle" font-weight="normal" >6.550</text>
<text x="28.86" y="225.62" transform="rotate(0.03 28.86 225.62)" font-size="4.75" fill="#2a2a2a" stroke="#2a2a2a" stroke-width="0.07" text-anchor="middle" font-weight="normal" >21</text>
<text x="58.56" y="225.62" transform="rotate(0.03 58.56 225.62)" font-size="4.75" fill="#2a2a2a" stroke="#2a2a2a" stroke-width="0.07" text-anchor="middle" font-weight="normal" >01:44:55</text>
<text x="88.28" y="225.62" transform="rotate(0.03 88.28 225.62)" font-size="4.75" fill="#2a2a2a" stroke="#2a2a2a" stroke-width="0.07" text-anchor="middle" font-weight="normal" >183.4</text>
<text x="117.98" y="225.62" transform="rotate(0.03 117.98 225.62)" font-size="4.75" fill="#2a2a2a" stroke="#2a2a2a" stroke-width="0.07" text-anchor="middle" font-weight="normal" >0.1160</text>
<text x="147.69" y="225.62" transform="rotate(0.03 147.69 225.62)" font-size="4.75" fill="#2a2a2a" stroke="#2a2a2a" stroke-width="0.07" text-anchor="middle" font-weight="normal" >72.500</text>
<text x="177.41" y="225.62" transform="rotate(0.03 177.41 225.62)" font-size="4.75" fill="#1c763c" stroke="#1c763c" stroke-width="0.07" text-anchor="middle" font-weight="normal" >143.9</text>
<text x="207.12" y="225.62" transform="rotate(0.03 207.12 225.62)" font-size="4.75" fill="#1c763c" stroke="#1c763c" stroke-width="0.07" text-anchor="middle" font-weight="normal" >0.1030</text>
<text x="236.83" y="225.62" transform="rotate(0.03 236.83 225.62)" font-size="4.75" fill="#1c763c" stroke="#1c763c" stroke-width="0.07" text-anchor="middle" font-weight="normal" >-0.500</text>
<text x="266.53" y="225.62" transform="rotate(0.03 266.53 225.62)" font-size="4.75" fill="#1c763c" stroke="#1c763c" stroke-width="0.07" text-anchor="middle" font-weight="normal" >-0.500</text>
<text x="296.25" y="225.62" transform="rotate(0.03 296.25 225.62)" font-size="4.75" fill="#1c763c" stroke="#1c763c" stroke-width="0.07" text-anchor="middle" font-weight="normal" >6.567</text>
<text x="28.86" y="231.79" transform="rotate(0.03 28.86 231.79)" font-size="4.75" fill="#2a2a2a" stroke="#2a2a2a" stroke-width="0.07" text-anchor="middle" font-weight="normal" >22</text>
<text x="58.56" y="231.79" transform="rotate(0.03 58.56 231.79)" font-size="4.75" fill="#2a2a2a" stroke="#2a2a2a" stroke-width="0.07" text-anchor="middle" font-weight="normal" >01:59:55</text>
<text x="88.28" y="231.79" transform="rotate(0.03 88.28 231.79)" font-size="4.75" fill="#2a2a2a" stroke="#2a2a2a" stroke-width="0.07" text-anchor="middle" font-weight="normal" >197.0</text>
<text x="117.98" y="231.79" transform="rotate(0.03 117.98 231.79)" font-size="4.75" fill="#2a2a2a" stroke="#2a2a2a" stroke-width="0.07" text-anchor="middle" font-weight="normal" >0.1310</text>
<text x="147.69" y="231.79" transform="rotate(0.03 147.69 231.79)" font-size="4.75" fill="#2a2a2a" stroke="#2a2a2a" stroke-width="0.07" text-anchor="middle" font-weight="normal" >71.800</text>
<text x="177.41" y="231.79" transform="rotate(0.03 177.41 231.79)" font-size="4.75" fill="#1c763c" stroke="#1c763c" stroke-width="0.07" text-anchor="middle" font-weight="normal" >157.5</text>
<text x="207.12" y="231.79" transform="rotate(0.03 207.12 231.79)" font-size="4.75" fill="#1c763c" stroke="#1c763c" stroke-width="0.07" text-anchor="middle" font-weight="normal" >0.1180</text>
<text x="236.83" y="231.79" transform="rotate(0.03 236.83 231.79)" font-size="4.75" fill="#1c763c" stroke="#1c763c" stroke-width="0.07" text-anchor="middle" font-weight="normal" >-1.200</text>
<text x="266.53" y="231.79" transform="rotate(0.03 266.53 231.79)" font-size="4.75" fill="#1c763c" stroke="#1c763c" stroke-width="0.07" text-anchor="middle" font-weight="normal" >-0.700</text>
<text x="296.25" y="231.79" transform="rotate(0.03 296.25 231.79)" font-size="4.75" fill="#1c763c" stroke="#1c763c" stroke-width="0.07" text-anchor="middle" font-weight="normal" >6.584</text>
<text x="28.86" y="237.96" transform="rotate(0.03 28.86 237.96)" font-size="4.75" fill="#2a2a2a" stroke="#2a2a2a" stroke-width="0.07" text-anchor="middle" font-weight="normal" >23</text>
<text x="58.56" y="237.96" transform="rotate(0.03 58.56 237.96)" font-size="4.75" fill="#2a2a2a" stroke="#2a2a2a" stroke-width="0.07" text-anchor="middle" font-weight="normal" >02:14:54</text>
<text x="88.28" y="237.96" transform="rotate(0.03 88.28 237.96)" font-size="4.75" fill="#2a2a2a" stroke="#2a2a2a" stroke-width="0.07" text-anchor="middle" font-weight="normal" >209.0</text>
<text x="117.98" y="237.96" transform="rotate(0.03 117.98 237.96)" font-size="4.75" fill="#2a2a2a" stroke="#2a2a2a" stroke-width="0.07" text-anchor="middle" font-weight="normal" >0.1470</text>
<text x="147.69" y="237.96" transform="rotate(0.03 147.69 237.96)" font-size="4.75" fill="#2a2a2a" stroke="#2a2a2a" stroke-width="0.07" text-anchor="middle" font-weight="normal" >71.600</text>
<text x="177.41" y="237.96" transform="rotate(0.03 177.41 237.96)" font-size="4.75" fill="#1c763c" stroke="#1c763c" stroke-width="0.07" text-anchor="middle" font-weight="normal" >169.5</text>
<text x="207.12" y="237.96" transform="rotate(0.03 207.12 237.96)" font-size="4.75" fill="#1c763c" stroke="#1c763c" stroke-width="0.07" text-anchor="middle" font-weight="normal" >0.1340</text>
<text x="236.83" y="237.96" transform="rotate(0.03 236.83 237.96)" font-size="4.75" fill="#1c763c" stroke="#1c763c" stroke-width="0.07" text-anchor="middle" font-weight="normal" >-1.400</text>
<text x="266.53" y="237.96" transform="rotate(0.03 266.53 237.96)" font-size="4.75" fill="#1c763c" stroke="#1c763c" stroke-width="0.07" text-anchor="middle" font-weight="normal" >-0.200</text>
<text x="296.25" y="237.96" transform="rotate(0.03 296.25 237.96)" font-size="4.75" fill="#1c763c" stroke="#1c763c" stroke-width="0.07" text-anchor="middle" font-weight="normal" >6.603</text>
<text x="28.86" y="244.13" transform="rotate(0.03 28.86 244.13)" font-size="4.75" fill="#2a2a2a" stroke="#2a2a2a" stroke-width="0.07" text-anchor="middle" font-weight="normal" >24</text>
<text x="58.56" y="244.13" transform="rotate(0.03 58.56 244.13)" font-size="4.75" fill="#2a2a2a" stroke="#2a2a2a" stroke-width="0.07" text-anchor="middle" font-weight="normal" >02:29:54</text>
<text x="88.28" y="244.13" transform="rotate(0.03 88.28 244.13)" font-size="4.75" fill="#2a2a2a" stroke="#2a2a2a" stroke-width="0.07" text-anchor="middle" font-weight="normal" >221.1</text>
<text x="117.98" y="244.13" transform="rotate(0.03 117.98 244.13)" font-size="4.75" fill="#2a2a2a" stroke="#2a2a2a" stroke-width="0.07" text-anchor="middle" font-weight="normal" >0.1620</text>
<text x="147.69" y="244.13" transform="rotate(0.03 147.69 244.13)" font-size="4.75" fill="#2a2a2a" stroke="#2a2a2a" stroke-width="0.07" text-anchor="middle" font-weight="normal" >71.000</text>
<text x="177.41" y="244.13" transform="rotate(0.03 177.41 244.13)" font-size="4.75" fill="#1c763c" stroke="#1c763c" stroke-width="0.07" text-anchor="middle" font-weight="normal" >181.6</text>
<text x="207.12" y="244.13" transform="rotate(0.03 207.12 244.13)" font-size="4.75" fill="#1c763c" stroke="#1c763c" stroke-width="0.07" text-anchor="middle" font-weight="normal" >0.1490</text>
<text x="236.83" y="244.13" transform="rotate(0.03 236.83 244.13)" font-size="4.75" fill="#1c763c" stroke="#1c763c" stroke-width="0.07" text-anchor="middle" font-weight="normal" >-2.000</text>
<text x="266.53" y="244.13" transform="rotate(0.03 266.53 244.13)" font-size="4.75" fill="#1c763c" stroke="#1c763c" stroke-width="0.07" text-anchor="middle" font-weight="normal" >-0.600</text>
<text x="296.25" y="244.13" transform="rotate(0.03 296.25 244.13)" font-size="4.75" fill="#1c763c" stroke="#1c763c" stroke-width="0.07" text-anchor="middle" font-weight="normal" >6.620</text>
<text x="28.86" y="250.30" transform="rotate(0.03 28.86 250.30)" font-size="4.75" fill="#2a2a2a" stroke="#2a2a2a" stroke-width="0.07" text-anchor="middle" font-weight="normal" >25</text>
<text x="58.56" y="250.30" transform="rotate(0.03 58.56 250.30)" font-size="4.75" fill="#2a2a2a" stroke="#2a2a2a" stroke-width="0.07" text-anchor="middle" font-weight="normal" >02:44:53</text>
<text x="88.28" y="250.30" transform="rotate(0.03 88.28 250.30)" font-size="4.75" fill="#2a2a2a" stroke="#2a2a2a" stroke-width="0.07" text-anchor="middle" font-weight="normal" >231.7</text>
<text x="117.98" y="250.30" transform="rotate(0.03 117.98 250.30)" font-size="4.75" fill="#2a2a2a" stroke="#2a2a2a" stroke-width="0.07" text-anchor="middle" font-weight="normal" >0.1770</text>
<text x="147.69" y="250.30" transform="rotate(0.03 147.69 250.30)" font-size="4.75" fill="#2a2a2a" stroke="#2a2a2a" stroke-width="0.07" text-anchor="middle" font-weight="normal" >70.500</text>
<text x="177.41" y="250.30" transform="rotate(0.03 177.41 250.30)" font-size="4.75" fill="#1c763c" stroke="#1c763c" stroke-width="0.07" text-anchor="middle" font-weight="normal" >192.2</text>
<text x="207.12" y="250.30" transform="rotate(0.03 207.12 250.30)" font-size="4.75" fill="#1c763c" stroke="#1c763c" stroke-width="0.07" text-anchor="middle" font-weight="normal" >0.1640</text>
<text x="236.83" y="250.30" transform="rotate(0.03 236.83 250.30)" font-size="4.75" fill="#1c763c" stroke="#1c763c" stroke-width="0.07" text-anchor="middle" font-weight="normal" >-2.500</text>
<text x="266.53" y="250.30" transform="rotate(0.03 266.53 250.30)" font-size="4.75" fill="#1c763c" stroke="#1c763c" stroke-width="0.07" text-anchor="middle" font-weight="normal" >-0.500</text>
<text x="296.25" y="250.30" transform="rotate(0.03 296.25 250.30)" font-size="4.75" fill="#1c763c" stroke="#1c763c" stroke-width="0.07" text-anchor="middle" font-weight="normal" >6.638</text>
<text x="28.86" y="256.47" transform="rotate(0.03 28.86 256.47)" font-size="4.75" fill="#2a2a2a" stroke="#2a2a2a" stroke-width="0.07" text-anchor="middle" font-weight="normal" >26</text>
<text x="58.56" y="256.47" transform="rotate(0.03 58.56 256.47)" font-size="4.75" fill="#2a2a2a" stroke="#2a2a2a" stroke-width="0.07" text-anchor="middle" font-weight="normal" >02:59:52</text>
<text x="88.28" y="256.47" transform="rotate(0.03 88.28 256.47)" font-size="4.75" fill="#2a2a2a" stroke="#2a2a2a" stroke-width="0.07" text-anchor="middle" font-weight="normal" >243.1</text>
<text x="117.98" y="256.47" transform="rotate(0.03 117.98 256.47)" font-size="4.75" fill="#2a2a2a" stroke="#2a2a2a" stroke-width="0.07" text-anchor="middle" font-weight="normal" >0.1920</text>
<text x="147.69" y="256.47" transform="rotate(0.03 147.69 256.47)" font-size="4.75" fill="#2a2a2a" stroke="#2a2a2a" stroke-width="0.07" text-anchor="middle" font-weight="normal" >70.400</text>
<text x="177.41" y="256.47" transform="rotate(0.03 177.41 256.47)" font-size="4.75" fill="#1c763c" stroke="#1c763c" stroke-width="0.07" text-anchor="middle" font-weight="normal" >203.6</text>
<text x="207.12" y="256.47" transform="rotate(0.03 207.12 256.47)" font-size="4.75" fill="#1c763c" stroke="#1c763c" stroke-width="0.07" text-anchor="middle" font-weight="normal" >0.1790</text>
<text x="236.83" y="256.47" transform="rotate(0.03 236.83 256.47)" font-size="4.75" fill="#1c763c" stroke="#1c763c" stroke-width="0.07" text-anchor="middle" font-weight="normal" >-2.600</text>
<text x="266.53" y="256.47" transform="rotate(0.03 266.53 256.47)" font-size="4.75" fill="#1c763c" stroke="#1c763c" stroke-width="0.07" text-anchor="middle" font-weight="normal" >-0.100</text>
<text x="296.25" y="256.47" transform="rotate(0.03 296.25 256.47)" font-size="4.75" fill="#1c763c" stroke="#1c763c" stroke-width="0.07" text-anchor="middle" font-weight="normal" >6.655</text>
<text x="28.86" y="262.64" transform="rotate(0.03 28.86 262.64)" font-size="4.75" fill="#2a2a2a" stroke="#2a2a2a" stroke-width="0.07" text-anchor="middle" font-weight="normal" >27</text>
<text x="58.56" y="262.64" transform="rotate(0.03 58.56 262.64)" font-size="4.75" fill="#2a2a2a" stroke="#2a2a2a" stroke-width="0.07" text-anchor="middle" font-weight="normal" >03:14:52</text>
<text x="88.28" y="262.64" transform="rotate(0.03 88.28 262.64)" font-size="4.75" fill="#2a2a2a" stroke="#2a2a2a" stroke-width="0.07" text-anchor="middle" font-weight="normal" >253.9</text>
<text x="117.98" y="262.64" transform="rotate(0.03 117.98 262.64)" font-size="4.75" fill="#2a2a2a" stroke="#2a2a2a" stroke-width="0.07" text-anchor="middle" font-weight="normal" >0.2070</text>
<text x="147.69" y="262.64" transform="rotate(0.03 147.69 262.64)" font-size="4.75" fill="#2a2a2a" stroke="#2a2a2a" stroke-width="0.07" text-anchor="middle" font-weight="normal" >69.600</text>
<text x="177.41" y="262.64" transform="rotate(0.03 177.41 262.64)" font-size="4.75" fill="#1c763c" stroke="#1c763c" stroke-width="0.07" text-anchor="middle" font-weight="normal" >214.4</text>
<text x="207.12" y="262.64" transform="rotate(0.03 207.12 262.64)" font-size="4.75" fill="#1c763c" stroke="#1c763c" stroke-width="0.07" text-anchor="middle" font-weight="normal" >0.1940</text>
<text x="236.83" y="262.64" transform="rotate(0.03 236.83 262.64)" font-size="4.75" fill="#1c763c" stroke="#1c763c" stroke-width="0.07" text-anchor="middle" font-weight="normal" >-3.400</text>
<text x="266.53" y="262.64" transform="rotate(0.03 266.53 262.64)" font-size="4.75" fill="#1c763c" stroke="#1c763c" stroke-width="0.07" text-anchor="middle" font-weight="normal" >-0.800</text>
<text x="296.25" y="262.64" transform="rotate(0.03 296.25 262.64)" font-size="4.75" fill="#1c763c" stroke="#1c763c" stroke-width="0.07" text-anchor="middle" font-weight="normal" >6.673</text>
<text x="28.86" y="268.81" transform="rotate(0.03 28.86 268.81)" font-size="4.75" fill="#2a2a2a" stroke="#2a2a2a" stroke-width="0.07" text-anchor="middle" font-weight="normal" >28</text>
<text x="58.56" y="268.81" transform="rotate(0.03 58.56 268.81)" font-size="4.75" fill="#2a2a2a" stroke="#2a2a2a" stroke-width="0.07" text-anchor="middle" font-weight="normal" >03:29:51</text>
<text x="88.28" y="268.81" transform="rotate(0.03 88.28 268.81)" font-size="4.75" fill="#2a2a2a" stroke="#2a2a2a" stroke-width="0.07" text-anchor="middle" font-weight="normal" >264.2</text>
<text x="117.98" y="268.81" transform="rotate(0.03 117.98 268.81)" font-size="4.75" fill="#2a2a2a" stroke="#2a2a2a" stroke-width="0.07" text-anchor="middle" font-weight="normal" >0.2220</text>
<text x="147.69" y="268.81" transform="rotate(0.03 147.69 268.81)" font-size="4.75" fill="#2a2a2a" stroke="#2a2a2a" stroke-width="0.07" text-anchor="middle" font-weight="normal" >69.700</text>
<text x="177.41" y="268.81" transform="rotate(0.03 177.41 268.81)" font-size="4.75" fill="#1c763c" stroke="#1c763c" stroke-width="0.07" text-anchor="middle" font-weight="normal" >224.7</text>
<text x="207.12" y="268.81" transform="rotate(0.03 207.12 268.81)" font-size="4.75" fill="#1c763c" stroke="#1c763c" stroke-width="0.07" text-anchor="middle" font-weight="normal" >0.2090</text>
<text x="236.83" y="268.81" transform="rotate(0.03 236.83 268.81)" font-size="4.75" fill="#1c763c" stroke="#1c763c" stroke-width="0.07" text-anchor="middle" font-weight="normal" >-3.300</text>
<text x="266.53" y="268.81" transform="rotate(0.03 266.53 268.81)" font-size="4.75" fill="#1c763c" stroke="#1c763c" stroke-width="0.07" text-anchor="middle" font-weight="normal" >0.100</text>
<text x="296.25" y="268.81" transform="rotate(0.03 296.25 268.81)" font-size="4.75" fill="#1c763c" stroke="#1c763c" stroke-width="0.07" text-anchor="middle" font-weight="normal" >6.691</text>
<text x="28.86" y="274.98" transform="rotate(0.03 28.86 274.98)" font-size="4.75" fill="#2a2a2a" stroke="#2a2a2a" stroke-width="0.07" text-anchor="middle" font-weight="normal" >29</text>
<text x="58.56" y="274.98" transform="rotate(0.03 58.56 274.98)" font-size="4.75" fill="#2a2a2a" stroke="#2a2a2a" stroke-width="0.07" text-anchor="middle" font-weight="normal" >03:44:50</text>
<text x="88.28" y="274.98" transform="rotate(0.03 88.28 274.98)" font-size="4.75" fill="#2a2a2a" stroke="#2a2a2a" stroke-width="0.07" text-anchor="middle" font-weight="normal" >274.6</text>
<text x="117.98" y="274.98" transform="rotate(0.03 117.98 274.98)" font-size="4.75" fill="#2a2a2a" stroke="#2a2a2a" stroke-width="0.07" text-anchor="middle" font-weight="normal" >0.2370</text>
<text x="147.69" y="274.98" transform="rotate(0.03 147.69 274.98)" font-size="4.75" fill="#2a2a2a" stroke="#2a2a2a" stroke-width="0.07" text-anchor="middle" font-weight="normal" >68.900</text>
<text x="177.41" y="274.98" transform="rotate(0.03 177.41 274.98)" font-size="4.75" fill="#1c763c" stroke="#1c763c" stroke-width="0.07" text-anchor="middle" font-weight="normal" >235.1</text>
<text x="207.12" y="274.98" transform="rotate(0.03 207.12 274.98)" font-size="4.75" fill="#1c763c" stroke="#1c763c" stroke-width="0.07" text-anchor="middle" font-weight="normal" >0.2240</text>
<text x="236.83" y="274.98" transform="rotate(0.03 236.83 274.98)" font-size="4.75" fill="#1c763c" stroke="#1c763c" stroke-width="0.07" text-anchor="middle" font-weight="normal" >-4.100</text>
<text x="266.53" y="274.98" transform="rotate(0.03 266.53 274.98)" font-size="4.75" fill="#1c763c" stroke="#1c763c" stroke-width="0.07" text-anchor="middle" font-weight="normal" >-0.800</text>
<text x="296.25" y="274.98" transform="rotate(0.03 296.25 274.98)" font-size="4.75" fill="#1c763c" stroke="#1c763c" stroke-width="0.07" text-anchor="middle" font-weight="normal" >6.709</text>
<text x="28.86" y="281.15" transform="rotate(0.03 28.86 281.15)" font-size="4.75" fill="#2a2a2a" stroke="#2a2a2a" stroke-width="0.07" text-anchor="middle" font-weight="normal" >30</text>
<text x="58.56" y="281.15" transform="rotate(0.03 58.56 281.15)" font-size="4.75" fill="#2a2a2a" stroke="#2a2a2a" stroke-width="0.07" text-anchor="middle" font-weight="normal" >03:59:50</text>
<text x="88.28" y="281.15" transform="rotate(0.03 88.28 281.15)" font-size="4.75" fill="#2a2a2a" stroke="#2a2a2a" stroke-width="0.07" text-anchor="middle" font-weight="normal" >284.2</text>
<text x="117.98" y="281.15" transform="rotate(0.03 117.98 281.15)" font-size="4.75" fill="#2a2a2a" stroke="#2a2a2a" stroke-width="0.07" text-anchor="middle" font-weight="normal" >0.2520</text>
<text x="147.69" y="281.15" transform="rotate(0.03 147.69 281.15)" font-size="4.75" fill="#2a2a2a" stroke="#2a2a2a" stroke-width="0.07" text-anchor="middle" font-weight="normal" >68.300</text>
<text x="177.41" y="281.15" transform="rotate(0.03 177.41 281.15)" font-size="4.75" fill="#1c763c" stroke="#1c763c" stroke-width="0.07" text-anchor="middle" font-weight="normal" >244.7</text>
<text x="207.12" y="281.15" transform="rotate(0.03 207.12 281.15)" font-size="4.75" fill="#1c763c" stroke="#1c763c" stroke-width="0.07" text-anchor="middle" font-weight="normal" >0.2390</text>
<text x="236.83" y="281.15" transform="rotate(0.03 236.83 281.15)" font-size="4.75" fill="#1c763c" stroke="#1c763c" stroke-width="0.07" text-anchor="middle" font-weight="normal" >-4.700</text>
<text x="266.53" y="281.15" transform="rotate(0.03 266.53 281.15)" font-size="4.75" fill="#1c763c" stroke="#1c763c" stroke-width="0.07" text-anchor="middle" font-weight="normal" >-0.600</text>
<text x="296.25" y="281.15" transform="rotate(0.03 296.25 281.15)" font-size="4.75" fill="#1c763c" stroke="#1c763c" stroke-width="0.07" text-anchor="middle" font-weight="normal" >6.727</text>
<text x="28.86" y="287.32" transform="rotate(0.03 28.86 287.32)" font-size="4.75" fill="#2a2a2a" stroke="#2a2a2a" stroke-width="0.07" text-anchor="middle" font-weight="normal" >31</text>
<text x="58.56" y="287.32" transform="rotate(0.03 58.56 287.32)" font-size="4.75" fill="#2a2a2a" stroke="#2a2a2a" stroke-width="0.07" text-anchor="middle" font-weight="normal" >04:14:49</text>
<text x="88.28" y="287.32" transform="rotate(0.03 88.28 287.32)" font-size="4.75" fill="#2a2a2a" stroke="#2a2a2a" stroke-width="0.07" text-anchor="middle" font-weight="normal" >293.6</text>
<text x="117.98" y="287.32" transform="rotate(0.03 117.98 287.32)" font-size="4.75" fill="#2a2a2a" stroke="#2a2a2a" stroke-width="0.07" text-anchor="middle" font-weight="normal" >0.2660</text>
<text x="147.69" y="287.32" transform="rotate(0.03 147.69 287.32)" font-size="4.75" fill="#2a2a2a" stroke="#2a2a2a" stroke-width="0.07" text-anchor="middle" font-weight="normal" >68.500</text>
<text x="177.41" y="287.32" transform="rotate(0.03 177.41 287.32)" font-size="4.75" fill="#1c763c" stroke="#1c763c" stroke-width="0.07" text-anchor="middle" font-weight="normal" >254.1</text>
<text x="207.12" y="287.32" transform="rotate(0.03 207.12 287.32)" font-size="4.75" fill="#1c763c" stroke="#1c763c" stroke-width="0.07" text-anchor="middle" font-weight="normal" >0.2530</text>
<text x="236.83" y="287.32" transform="rotate(0.03 236.83 287.32)" font-size="4.75" fill="#1c763c" stroke="#1c763c" stroke-width="0.07" text-anchor="middle" font-weight="normal" >-4.500</text>
<text x="266.53" y="287.32" transform="rotate(0.03 266.53 287.32)" font-size="4.75" fill="#1c763c" stroke="#1c763c" stroke-width="0.07" text-anchor="middle" font-weight="normal" >0.200</text>
<text x="296.25" y="287.32" transform="rotate(0.03 296.25 287.32)" font-size="4.75" fill="#1c763c" stroke="#1c763c" stroke-width="0.07" text-anchor="middle" font-weight="normal" >6.743</text>
<text x="28.86" y="293.49" transform="rotate(0.03 28.86 293.49)" font-size="4.75" fill="#2a2a2a" stroke="#2a2a2a" stroke-width="0.07" text-anchor="middle" font-weight="normal" >32</text>
<text x="58.56" y="293.49" transform="rotate(0.03 58.56 293.49)" font-size="4.75" fill="#2a2a2a" stroke="#2a2a2a" stroke-width="0.07" text-anchor="middle" font-weight="normal" >04:29:48</text>
<text x="88.28" y="293.49" transform="rotate(0.03 88.28 293.49)" font-size="4.75" fill="#2a2a2a" stroke="#2a2a2a" stroke-width="0.07" text-anchor="middle" font-weight="normal" >302.6</text>
<text x="117.98" y="293.49" transform="rotate(0.03 117.98 293.49)" font-size="4.75" fill="#2a2a2a" stroke="#2a2a2a" stroke-width="0.07" text-anchor="middle" font-weight="normal" >0.2810</text>
<text x="147.69" y="293.49" transform="rotate(0.03 147.69 293.49)" font-size="4.75" fill="#2a2a2a" stroke="#2a2a2a" stroke-width="0.07" text-anchor="middle" font-weight="normal" >67.700</text>
<text x="177.41" y="293.49" transform="rotate(0.03 177.41 293.49)" font-size="4.75" fill="#1c763c" stroke="#1c763c" stroke-width="0.07" text-anchor="middle" font-weight="normal" >263.1</text>
<text x="207.12" y="293.49" transform="rotate(0.03 207.12 293.49)" font-size="4.75" fill="#1c763c" stroke="#1c763c" stroke-width="0.07" text-anchor="middle" font-weight="normal" >0.2680</text>
<text x="236.83" y="293.49" transform="rotate(0.03 236.83 293.49)" font-size="4.75" fill="#1c763c" stroke="#1c763c" stroke-width="0.07" text-anchor="middle" font-weight="normal" >-5.300</text>
<text x="266.53" y="293.49" transform="rotate(0.03 266.53 293.49)" font-size="4.75" fill="#1c763c" stroke="#1c763c" stroke-width="0.07" text-anchor="middle" font-weight="normal" >-0.800</text>
<text x="296.25" y="293.49" transform="rotate(0.03 296.25 293.49)" font-size="4.75" fill="#1c763c" stroke="#1c763c" stroke-width="0.07" text-anchor="middle" font-weight="normal" >6.762</text>
<text x="28.86" y="299.66" transform="rotate(0.03 28.86 299.66)" font-size="4.75" fill="#2a2a2a" stroke="#2a2a2a" stroke-width="0.07" text-anchor="middle" font-weight="normal" >33</text>
<text x="58.56" y="299.66" transform="rotate(0.03 58.56 299.66)" font-size="4.75" fill="#2a2a2a" stroke="#2a2a2a" stroke-width="0.07" text-anchor="middle" font-weight="normal" >04:44:48</text>
<text x="88.28" y="299.66" transform="rotate(0.03 88.28 299.66)" font-size="4.75" fill="#2a2a2a" stroke="#2a2a2a" stroke-width="0.07" text-anchor="middle" font-weight="normal" >311.6</text>
<text x="117.98" y="299.66" transform="rotate(0.03 117.98 299.66)" font-size="4.75" fill="#2a2a2a" stroke="#2a2a2a" stroke-width="0.07" text-anchor="middle" font-weight="normal" >0.2960</text>
<text x="147.69" y="299.66" transform="rotate(0.03 147.69 299.66)" font-size="4.75" fill="#2a2a2a" stroke="#2a2a2a" stroke-width="0.07" text-anchor="middle" font-weight="normal" >67.800</text>
<text x="177.41" y="299.66" transform="rotate(0.03 177.41 299.66)" font-size="4.75" fill="#1c763c" stroke="#1c763c" stroke-width="0.07" text-anchor="middle" font-weight="normal" >272.1</text>
<text x="207.12" y="299.66" transform="rotate(0.03 207.12 299.66)" font-size="4.75" fill="#1c763c" stroke="#1c763c" stroke-width="0.07" text-anchor="middle" font-weight="normal" >0.2830</text>
<text x="236.83" y="299.66" transform="rotate(0.03 236.83 299.66)" font-size="4.75" fill="#1c763c" stroke="#1c763c" stroke-width="0.07" text-anchor="middle" font-weight="normal" >-5.200</text>
<text x="266.53" y="299.66" transform="rotate(0.03 266.53 299.66)" font-size="4.75" fill="#1c763c" stroke="#1c763c" stroke-width="0.07" text-anchor="middle" font-weight="normal" >0.100</text>
<text x="296.25" y="299.66" transform="rotate(0.03 296.25 299.66)" font-size="4.75" fill="#1c763c" stroke="#1c763c" stroke-width="0.07" text-anchor="middle" font-weight="normal" >6.780</text>
<text x="28.86" y="305.83" transform="rotate(0.03 28.86 305.83)" font-size="4.75" fill="#2a2a2a" stroke="#2a2a2a" stroke-width="0.07" text-anchor="middle" font-weight="normal" >34</text>
<text x="58.56" y="305.83" transform="rotate(0.03 58.56 305.83)" font-size="4.75" fill="#2a2a2a" stroke="#2a2a2a" stroke-width="0.07" text-anchor="middle" font-weight="normal" >04:59:47</text>
<text x="88.28" y="305.83" transform="rotate(0.03 88.28 305.83)" font-size="4.75" fill="#2a2a2a" stroke="#2a2a2a" stroke-width="0.07" text-anchor="middle" font-weight="normal" >320.7</text>
<text x="117.98" y="305.83" transform="rotate(0.03 117.98 305.83)" font-size="4.75" fill="#2a2a2a" stroke="#2a2a2a" stroke-width="0.07" text-anchor="middle" font-weight="normal" >0.3110</text>
<text x="147.69" y="305.83" transform="rotate(0.03 147.69 305.83)" font-size="4.75" fill="#2a2a2a" stroke="#2a2a2a" stroke-width="0.07" text-anchor="middle" font-weight="normal" >67.100</text>
<text x="177.41" y="305.83" transform="rotate(0.03 177.41 305.83)" font-size="4.75" fill="#1c763c" stroke="#1c763c" stroke-width="0.07" text-anchor="middle" font-weight="normal" >281.2</text>
<text x="207.12" y="305.83" transform="rotate(0.03 207.12 305.83)" font-size="4.75" fill="#1c763c" stroke="#1c763c" stroke-width="0.07" text-anchor="middle" font-weight="normal" >0.2980</text>
<text x="236.83" y="305.83" transform="rotate(0.03 236.83 305.83)" font-size="4.75" fill="#1c763c" stroke="#1c763c" stroke-width="0.07" text-anchor="middle" font-weight="normal" >-5.900</text>
<text x="266.53" y="305.83" transform="rotate(0.03 266.53 305.83)" font-size="4.75" fill="#1c763c" stroke="#1c763c" stroke-width="0.07" text-anchor="middle" font-weight="normal" >-0.700</text>
<text x="296.25" y="305.83" transform="rotate(0.03 296.25 305.83)" font-size="4.75" fill="#1c763c" stroke="#1c763c" stroke-width="0.07" text-anchor="middle" font-weight="normal" >6.798</text>
<text x="28.86" y="312.00" transform="rotate(0.03 28.86 312.00)" font-size="4.75" fill="#2a2a2a" stroke="#2a2a2a" stroke-width="0.07" text-anchor="middle" font-weight="normal" >35</text>
<text x="58.56" y="312.00" transform="rotate(0.03 58.56 312.00)" font-size="4.75" fill="#2a2a2a" stroke="#2a2a2a" stroke-width="0.07" text-anchor="middle" font-weight="normal" >05:14:46</text>
<text x="88.28" y="312.00" transform="rotate(0.03 88.28 312.00)" font-size="4.75" fill="#2a2a2a" stroke="#2a2a2a" stroke-width="0.07" text-anchor="middle" font-weight="normal" >329.7</text>
<text x="117.98" y="312.00" transform="rotate(0.03 117.98 312.00)" font-size="4.75" fill="#2a2a2a" stroke="#2a2a2a" stroke-width="0.07" text-anchor="middle" font-weight="normal" >0.3260</text>
<text x="147.69" y="312.00" transform="rotate(0.03 147.69 312.00)" font-size="4.75" fill="#2a2a2a" stroke="#2a2a2a" stroke-width="0.07" text-anchor="middle" font-weight="normal" >66.800</text>
<text x="177.41" y="312.00" transform="rotate(0.03 177.41 312.00)" font-size="4.75" fill="#1c763c" stroke="#1c763c" stroke-width="0.07" text-anchor="middle" font-weight="normal" >290.2</text>
<text x="207.12" y="312.00" transform="rotate(0.03 207.12 312.00)" font-size="4.75" fill="#1c763c" stroke="#1c763c" stroke-width="0.07" text-anchor="middle" font-weight="normal" >0.3130</text>
<text x="236.83" y="312.00" transform="rotate(0.03 236.83 312.00)" font-size="4.75" fill="#1c763c" stroke="#1c763c" stroke-width="0.07" text-anchor="middle" font-weight="normal" >-6.200</text>
<text x="266.53" y="312.00" transform="rotate(0.03 266.53 312.00)" font-size="4.75" fill="#1c763c" stroke="#1c763c" stroke-width="0.07" text-anchor="middle" font-weight="normal" >-0.300</text>
<text x="296.25" y="312.00" transform="rotate(0.03 296.25 312.00)" font-size="4.75" fill="#1c763c" stroke="#1c763c" stroke-width="0.07" text-anchor="middle" font-weight="normal" >6.817</text>
<text x="28.86" y="318.17" transform="rotate(0.03 28.86 318.17)" font-size="4.75" fill="#2a2a2a" stroke="#2a2a2a" stroke-width="0.07" text-anchor="middle" font-weight="normal" >36</text>
<text x="58.56" y="318.17" transform="rotate(0.03 58.56 318.17)" font-size="4.75" fill="#2a2a2a" stroke="#2a2a2a" stroke-width="0.07" text-anchor="middle" font-weight="normal" >05:29:46</text>
<text x="88.28" y="318.17" transform="rotate(0.03 88.28 318.17)" font-size="4.75" fill="#2a2a2a" stroke="#2a2a2a" stroke-width="0.07" text-anchor="middle" font-weight="normal" >337.9</text>
<text x="117.98" y="318.17" transform="rotate(0.03 117.98 318.17)" font-size="4.75" fill="#2a2a2a" stroke="#2a2a2a" stroke-width="0.07" text-anchor="middle" font-weight="normal" >0.3410</text>
<text x="147.69" y="318.17" transform="rotate(0.03 147.69 318.17)" font-size="4.75" fill="#2a2a2a" stroke="#2a2a2a" stroke-width="0.07" text-anchor="middle" font-weight="normal" >66.600</text>
<text x="177.41" y="318.17" transform="rotate(0.03 177.41 318.17)" font-size="4.75" fill="#1c763c" stroke="#1c763c" stroke-width="0.07" text-anchor="middle" font-weight="normal" >298.4</text>
<text x="207.12" y="318.17" transform="rotate(0.03 207.12 318.17)" font-size="4.75" fill="#1c763c" stroke="#1c763c" stroke-width="0.07" text-anchor="middle" font-weight="normal" >0.3280</text>
<text x="236.83" y="318.17" transform="rotate(0.03 236.83 318.17)" font-size="4.75" fill="#1c763c" stroke="#1c763c" stroke-width="0.07" text-anchor="middle" font-weight="normal" >-6.400</text>
<text x="266.53" y="318.17" transform="rotate(0.03 266.53 318.17)" font-size="4.75" fill="#1c763c" stroke="#1c763c" stroke-width="0.07" text-anchor="middle" font-weight="normal" >-0.200</text>
<text x="296.25" y="318.17" transform="rotate(0.03 296.25 318.17)" font-size="4.75" fill="#1c763c" stroke="#1c763c" stroke-width="0.07" text-anchor="middle" font-weight="normal" >6.835</text>
</g>
<path d="M9.2 93.1 l1.9 1.3 l-1.9 1.3z" fill="#1c1c1c"/>
<rect x="559.00" y="62.00" width="4.70" height="262.00" fill="#f4f4f4" />
<rect x="559.00" y="66.20" width="4.60" height="60.00" fill="#d2d2d2" />
<path d="M560.2 65.2 l1.1 -1.3 l1.1 1.3z" fill="#505050"/>
<line x1="563.75" y1="52.00" x2="563.75" y2="100.00" stroke="#d0d0d0" stroke-width="0.4" />
<text x="557.90" y="90.10" transform="rotate(0.03 557.90 90.10)" font-size="5.0" fill="#1e1e1e" stroke="#1e1e1e" stroke-width="0.1" text-anchor="middle" font-weight="bold" >A</text>
<rect x="9.00" y="319.60" width="555.00" height="5.20" fill="url(#gScroll)" />
<path d="M11.6 320.7 l-1.2 1.1 l1.2 1.1z" fill="#505050"/>
<rect x="0.00" y="324.70" width="563.90" height="15.50" fill="url(#gBot)" />
<path d="M9.4 324.8 h25.6 v7.7 q0 1 -1 1 h-23.6 q-1 0 -1 -1z" fill="#e9e9e9"/>
<text x="22.10" y="330.70" transform="rotate(0.03 22.10 330.70)" font-size="4.25" fill="#2c8a44" stroke="#2c8a44" stroke-width="0.1" text-anchor="middle" font-weight="bold" >Specimen 1</text>
<text x="48.40" y="330.60" transform="rotate(0.03 48.40 330.60)" font-size="3.7" fill="#4a94ec" stroke="#4a94ec" stroke-width="0.1" text-anchor="middle" font-weight="normal" >Specimen 2</text>
<text x="76.20" y="330.60" transform="rotate(0.03 76.20 330.60)" font-size="3.7" fill="#e03030" stroke="#e03030" stroke-width="0.1" text-anchor="middle" font-weight="normal" >Specimen 3</text>
<text x="107.90" y="330.60" transform="rotate(0.03 107.90 330.60)" font-size="3.7" fill="#dedede" stroke="#dedede" stroke-width="0.1" text-anchor="middle" font-weight="normal" >Square Root Time</text>
<text x="139.60" y="330.60" transform="rotate(0.03 139.60 330.60)" font-size="3.7" fill="#dedede" stroke="#dedede" stroke-width="0.1" text-anchor="middle" font-weight="normal" >Log Time</text>
<text x="165.90" y="330.60" transform="rotate(0.03 165.90 330.60)" font-size="3.7" fill="#dedede" stroke="#dedede" stroke-width="0.1" text-anchor="middle" font-weight="normal" >Stress-Strain</text>
<text x="196.20" y="330.60" transform="rotate(0.03 196.20 330.60)" font-size="3.7" fill="#dedede" stroke="#dedede" stroke-width="0.1" text-anchor="middle" font-weight="normal" >Pore Pressure</text>
<text x="226.50" y="330.60" transform="rotate(0.03 226.50 330.60)" font-size="3.7" fill="#dedede" stroke="#dedede" stroke-width="0.1" text-anchor="middle" font-weight="normal" >Stress Ratio</text>
<text x="247.00" y="330.60" transform="rotate(0.03 247.00 330.60)" font-size="3.7" fill="#dedede" stroke="#dedede" stroke-width="0.1" text-anchor="middle" font-weight="normal" >PQ</text>
<text x="266.60" y="330.60" transform="rotate(0.03 266.60 330.60)" font-size="3.7" fill="#dedede" stroke="#dedede" stroke-width="0.1" text-anchor="middle" font-weight="normal" >Mohr Circles</text>
<rect x="0.00" y="340.20" width="563.90" height="11.80" fill="#0c2e4e" />
<rect x="4.83" y="344.33" width="2.15" height="2.15" fill="#ffffff" />
<rect x="4.83" y="346.73" width="2.15" height="2.15" fill="#ffffff" />
<rect x="7.23" y="344.33" width="2.15" height="2.15" fill="#ffffff" />
<rect x="7.23" y="346.73" width="2.15" height="2.15" fill="#ffffff" />
<circle cx="21.50" cy="346.60" r="1.75" fill="none" stroke="#ffffff" stroke-width="0.85"/>
<rect x="33.30" y="345.00" width="5.20" height="3.20" fill="none" stroke="#dcdcdc" stroke-width="0.60" rx="0.80"/>
<line x1="32.60" y1="345.70" x2="32.60" y2="347.50" stroke="#dcdcdc" stroke-width="0.5" />
<line x1="39.20" y1="345.70" x2="39.20" y2="347.50" stroke="#dcdcdc" stroke-width="0.5" />
<text x="50.30" y="349.60" font-size="9.60" font-weight="bold" fill="#2f8ee8" stroke="#2f8ee8" stroke-width="0.15" text-anchor="middle">e</text>
<rect x="61.40" y="344.00" width="6.60" height="5.40" fill="#f5d560" rx="0.4"/>
<rect x="61.40" y="344.00" width="2.80" height="1.00" fill="#e8b83a" />
<rect x="62.70" y="346.70" width="4.00" height="2.70" fill="#4aa0e6" />
<rect x="63.70" y="347.80" width="2.00" height="1.60" fill="#f5d560" />
<rect x="77.90" y="344.00" width="4.80" height="5.00" fill="#3a8ee0" />
<rect x="79.50" y="345.20" width="2.60" height="2.60" fill="#d4e8fc" />
<rect x="75.50" y="344.60" width="4.00" height="4.20" fill="#1566c0" />
<text x="77.50" y="348.15" font-size="4.20" font-weight="bold" fill="#ffffff" text-anchor="middle">o</text>
<path d="M90.20 345.30 l1.1 -0.8 l2.3 1.9 l2.5 -2.9 l1.1 0.6 v5.2 l-1.1 0.6 l-2.5 -2.9 l-2.3 1.9 l-1.1 -0.8z" fill="#a864d8" transform="translate(0.00 0.00) scale(1.0)"/>
<path d="M94.70 345.40 v2.40 l-1.50 -1.20z" fill="#ffffff"/>
<rect x="104.70" y="343.70" width="6.40" height="5.80" fill="#e9a31e" rx="0.3"/>
<rect x="105.80" y="346.50" width="4.20" height="2.10" fill="#7a4c06" opacity="0.6"/>
<rect x="44.20" y="351.10" width="11.60" height="0.90" fill="#8da7c0" />
<rect x="58.60" y="351.10" width="11.60" height="0.90" fill="#8da7c0" />
<rect x="73.00" y="351.10" width="11.60" height="0.90" fill="#8da7c0" />
<rect x="87.40" y="351.10" width="11.60" height="0.90" fill="#8da7c0" />
<rect x="101.80" y="351.10" width="11.60" height="0.90" fill="#8da7c0" />
</g>
<g id="win2">
<rect x="303.50" y="90.20" width="564.50" height="352.00" fill="#ffffff" />
<rect x="305.20" y="91.20" width="3.80" height="3.80" fill="#b8cc20" />
<rect x="305.70" y="93.00" width="2.80" height="1.60" fill="#4a6a10" />
<text x="311.00" y="95.00" transform="rotate(0.03 311.00 95.00)" font-size="3.65" fill="#b8b8b8" stroke="#b8b8b8" stroke-width="0.1" text-anchor="start" font-weight="normal" >UU_Test.hsdn - UU Test</text>
<rect x="304.10" y="96.50" width="563.90" height="14.00" fill="url(#gBar)" />
<rect x="304.10" y="110.00" width="563.90" height="1.00" fill="#6b6c6c" />
<rect x="304.10" y="96.50" width="34.50" height="7.00" fill="#565656" />
<g transform="translate(304.20 89.29) scale(1.06) translate(0 10.3) scale(1 0.9) translate(0 -10.3)">
<path d="M1.6 8.0 h2.2 l1.0 1.0 v3.4 h-3.2z" fill="#f6f6f6"/>
<path d="M7.3 9.2 h1.7 l0.5 0.6 h2.3 v2.7 h-4.5z" fill="#f2c744"/>
<path d="M7.3 12.5 l0.9 -1.9 h4.0 l-0.4 1.9z" fill="#f8dc7a"/>
<rect x="14.10" y="8.20" width="3.50" height="3.90" fill="#7668c4" />
<rect x="14.80" y="8.20" width="2.00" height="1.20" fill="#b8b0e8" />
<line x1="15.20" y1="9.20" x2="18.00" y2="12.60" stroke="#ecc878" stroke-width="0.9" />
<rect x="20.70" y="9.60" width="4.60" height="2.20" fill="#e2e6ee" rx="0.5"/>
<rect x="21.70" y="8.10" width="2.60" height="1.70" fill="#ffffff" />
<rect x="21.80" y="10.90" width="2.40" height="1.70" fill="#62a0e0" />
<line x1="27.30" y1="8.30" x2="27.30" y2="12.70" stroke="#8c8c8c" stroke-width="0.45" />
<path d="M28.8 10.2 h2.2 l-1.1 1.4z" fill="#242424"/>
</g>
<rect x="461.80" y="96.50" width="32.80" height="14.00" fill="url(#gGreen)" />
<rect x="461.80" y="96.40" width="32.80" height="1.00" fill="#3ecb3e" />
<text x="478.20" y="101.60" transform="rotate(0.03 478.20 101.60)" font-size="4.27" fill="#bde6bd" stroke="#bde6bd" stroke-width="0.1" text-anchor="middle" font-weight="normal" >Graph Tools</text>
<text x="478.20" y="108.50" transform="rotate(0.03 478.20 108.50)" font-size="4.27" fill="#d4dcd4" stroke="#d4dcd4" stroke-width="0.1" text-anchor="middle" font-weight="normal" >Tangent Tool</text>
<rect x="304.10" y="103.60" width="16.60" height="6.90" fill="url(#gFile)" />
<text x="310.80" y="108.60" transform="rotate(0.03 310.80 108.60)" font-size="4.3" fill="#ffffff" stroke="#ffffff" stroke-width="0.1" text-anchor="middle" font-weight="bold" >File</text>
<path d="M316.50 106.4 h2.0 l-1.0 1.3z" fill="#ffffff"/>
<text x="342.00" y="108.50" transform="rotate(0.03 342.00 108.50)" font-size="4.27" fill="#e6e6e6" stroke="#e6e6e6" stroke-width="0.1" text-anchor="middle" font-weight="normal" >Test Parameters</text>
<text x="370.20" y="108.50" transform="rotate(0.03 370.20 108.50)" font-size="4.27" fill="#828282"  text-anchor="middle" font-weight="normal" >Edit</text>
<path d="M378.0 110.6 V104.7 q0 -0.9 0.9 -0.9 h17.0 q0.9 0 0.9 0.9 V110.6z" fill="url(#gTabSel)"/>
<text x="387.40" y="108.50" transform="rotate(0.03 387.40 108.50)" font-size="4.27" fill="#2c2c2c" stroke="#2c2c2c" stroke-width="0.04" text-anchor="middle" font-weight="normal" >Graph</text>
<text x="409.50" y="108.50" transform="rotate(0.03 409.50 108.50)" font-size="4.27" fill="#e6e6e6" stroke="#e6e6e6" stroke-width="0.1" text-anchor="middle" font-weight="normal" >Reports</text>
<text x="432.60" y="108.50" transform="rotate(0.03 432.60 108.50)" font-size="4.27" fill="#e6e6e6" stroke="#e6e6e6" stroke-width="0.1" text-anchor="middle" font-weight="normal" >Options</text>
<text x="453.00" y="108.50" transform="rotate(0.03 453.00 108.50)" font-size="4.27" fill="#e6e6e6" stroke="#e6e6e6" stroke-width="0.1" text-anchor="middle" font-weight="normal" >View</text>
<rect x="304.10" y="110.50" width="563.90" height="30.00" fill="url(#gRib)" />
<line x1="304.10" y1="139.50" x2="868.00" y2="139.50" stroke="#a6a6a6" stroke-width="1.0" />
<circle cx="314.4" cy="116.9" r="3.45" fill="#d8dce2" stroke="#1f7ad4" stroke-width="2.2"/>
<path d="M311.27 118.36 A3.45 3.45 0 0 1 312.28 114.18" fill="none" stroke="#e2481c" stroke-width="2.3"/>
<path d="M312.09 114.34 A3.45 3.45 0 0 1 314.28 113.45" fill="none" stroke="#f6d41e" stroke-width="2.3"/>
<text x="314.60" y="126.80" transform="rotate(0.03 314.60 126.80)" font-size="4.27" fill="#222" stroke="#222" stroke-width="0.1" text-anchor="middle" font-weight="normal" >Default</text>
<text x="314.60" y="132.10" transform="rotate(0.03 314.60 132.10)" font-size="4.27" fill="#222" stroke="#222" stroke-width="0.1" text-anchor="middle" font-weight="normal" >Graphs ·</text>
<line x1="325.60" y1="113.00" x2="325.60" y2="133.50" stroke="#979797" stroke-width="0.5" />
<line x1="326.10" y1="113.00" x2="326.10" y2="133.50" stroke="#d2d2d2" stroke-width="0.4" />
<rect x="329.00" y="113.70" width="8.40" height="6.90" fill="#e6d4d6" rx="0.8"/>
<rect x="329.50" y="114.20" width="7.40" height="5.90" fill="#c62a2a" rx="0.6"/>
<rect x="329.50" y="114.20" width="7.40" height="2.90" fill="#dc5a58" rx="0.6"/>
<path d="M332.1 116.0 l2.2 2.3 M334.3 116.0 l-2.2 2.3" stroke="#fff" stroke-width="0.95"/>
<text x="333.00" y="126.80" transform="rotate(0.03 333.00 126.80)" font-size="4.27" fill="#222" stroke="#222" stroke-width="0.1" text-anchor="middle" font-weight="normal" >Close</text>
<text x="333.00" y="132.10" transform="rotate(0.03 333.00 132.10)" font-size="4.27" fill="#222" stroke="#222" stroke-width="0.1" text-anchor="middle" font-weight="normal" >Graph</text>
<text x="323.00" y="138.30" transform="rotate(0.03 323.00 138.30)" font-size="4.2" fill="#3c3c3c" stroke="#3c3c3c" stroke-width="0.1" text-anchor="middle" font-weight="normal" >Graph</text>
<line x1="341.50" y1="111.20" x2="341.50" y2="139.00" stroke="#909090" stroke-width="0.5" />
<line x1="342.00" y1="111.20" x2="342.00" y2="139.00" stroke="#d2d2d2" stroke-width="0.4" />
<rect x="345.00" y="114.90" width="3.60" height="3.60" fill="#f6f6f6" stroke="#b4b4b4" stroke-width="0.4"/>
<text x="350.90" y="118.00" transform="rotate(0.03 350.90 118.00)" font-size="4.27" fill="#222" stroke="#222" stroke-width="0.1" text-anchor="start" font-weight="normal" >Manual Scaling</text>
<rect x="345.00" y="121.50" width="3.60" height="3.60" fill="#f6f6f6" stroke="#b4b4b4" stroke-width="0.4"/>
<text x="350.90" y="124.60" transform="rotate(0.03 350.90 124.60)" font-size="4.27" fill="#222" stroke="#222" stroke-width="0.1" text-anchor="start" font-weight="normal" >Show Points</text>
<rect x="345.00" y="128.20" width="3.60" height="3.60" fill="#f6f6f6" stroke="#b4b4b4" stroke-width="0.4"/>
<text x="350.90" y="131.30" transform="rotate(0.03 350.90 131.30)" font-size="4.27" fill="#222" stroke="#222" stroke-width="0.1" text-anchor="start" font-weight="normal" >Smooth Curve</text>
<rect x="383.00" y="121.50" width="3.60" height="3.60" fill="#f6f6f6" stroke="#b4b4b4" stroke-width="0.4"/>
<text x="388.90" y="124.60" transform="rotate(0.03 388.90 124.60)" font-size="4.27" fill="#222" stroke="#222" stroke-width="0.1" text-anchor="start" font-weight="normal" >Invert Y-Axis</text>
<line x1="421.80" y1="117.60" x2="417.70" y2="121.30" stroke="#b0b0b0" stroke-width="1.3" />
<circle cx="424.0" cy="115.3" r="2.75" fill="#e2e2e2" stroke="#b4b4b4" stroke-width="0.8"/>
<text x="422.00" y="126.80" transform="rotate(0.03 422.00 126.80)" font-size="4.27" fill="#9a9a9a" stroke="#9a9a9a" stroke-width="0.1" text-anchor="middle" font-weight="normal" >Manual</text>
<text x="422.00" y="132.10" transform="rotate(0.03 422.00 132.10)" font-size="4.27" fill="#9a9a9a" stroke="#9a9a9a" stroke-width="0.1" text-anchor="middle" font-weight="normal" >Scaling</text>
<line x1="431.40" y1="113.00" x2="431.40" y2="133.50" stroke="#979797" stroke-width="0.5" />
<line x1="431.90" y1="113.00" x2="431.90" y2="133.50" stroke="#d2d2d2" stroke-width="0.4" />
<rect x="436.00" y="113.20" width="8.20" height="7.40" fill="#eaf2fc" stroke="#6f9fd8" stroke-width="0.5" stroke-dasharray="1 0.6"/>
<rect x="438.20" y="114.60" width="3.60" height="4.20" fill="#b4d0f2" />
<line x1="441.40" y1="118.40" x2="444.20" y2="121.40" stroke="#5878a8" stroke-width="0.9" />
<text x="440.00" y="126.80" transform="rotate(0.03 440.00 126.80)" font-size="4.27" fill="#222" stroke="#222" stroke-width="0.1" text-anchor="middle" font-weight="normal" >Manual</text>
<text x="440.00" y="132.10" transform="rotate(0.03 440.00 132.10)" font-size="4.27" fill="#222" stroke="#222" stroke-width="0.1" text-anchor="middle" font-weight="normal" >Zoom</text>
<circle cx="452.2" cy="118.6" r="1.5" fill="#e4eefa" stroke="#7c9cc8" stroke-width="0.5"/>
<line x1="453.30" y1="119.70" x2="454.80" y2="121.20" stroke="#d8a840" stroke-width="0.9" />
<circle cx="452.2" cy="126.4" r="1.5" fill="#e4eefa" stroke="#7c9cc8" stroke-width="0.5"/>
<line x1="453.30" y1="127.50" x2="454.80" y2="129.00" stroke="#d8a840" stroke-width="0.9" />
<line x1="457.70" y1="113.00" x2="457.70" y2="133.50" stroke="#979797" stroke-width="0.5" />
<line x1="458.20" y1="113.00" x2="458.20" y2="133.50" stroke="#d2d2d2" stroke-width="0.4" />
<path d="M468.0 113.6 h2.0 l0.6 3.0 v3.6 q0 0.8 -0.8 0.8 h-2.4 q-0.8 0 -0.8 -0.8 v-2.8z" fill="#2a58b4"/>
<path d="M474.0 113.6 h-2.0 l-0.6 3.0 v3.6 q0 0.8 0.8 0.8 h2.4 q0.8 0 0.8 -0.8 v-2.8z" fill="#2a58b4"/>
<rect x="470.00" y="115.20" width="2.00" height="2.60" fill="#1c3c8c" />
<line x1="468.30" y1="114.60" x2="467.40" y2="119.40" stroke="#9cc0f4" stroke-width="0.8" />
<line x1="473.00" y1="114.60" x2="473.80" y2="119.40" stroke="#9cc0f4" stroke-width="0.8" />
<text x="471.00" y="126.80" transform="rotate(0.03 471.00 126.80)" font-size="4.27" fill="#222" stroke="#222" stroke-width="0.1" text-anchor="middle" font-weight="normal" >Visible</text>
<text x="471.00" y="132.10" transform="rotate(0.03 471.00 132.10)" font-size="4.27" fill="#222" stroke="#222" stroke-width="0.1" text-anchor="middle" font-weight="normal" >Specimen ·</text>
<line x1="484.60" y1="113.00" x2="484.60" y2="133.50" stroke="#979797" stroke-width="0.5" />
<line x1="485.10" y1="113.00" x2="485.10" y2="133.50" stroke="#d2d2d2" stroke-width="0.4" />
<rect x="491.20" y="113.20" width="5.80" height="7.60" fill="#f2f6fc" stroke="#a9bbd8" stroke-width="0.4"/>
<path d="M492.6 116.2 a1.7 1.7 0 0 1 3.2 0 M495.8 118.4 a1.7 1.7 0 0 1 -3.2 0" stroke="#2fa84a" stroke-width="1.0" fill="none"/>
<text x="494.20" y="126.80" transform="rotate(0.03 494.20 126.80)" font-size="4.27" fill="#222" stroke="#222" stroke-width="0.1" text-anchor="middle" font-weight="normal" >Refresh</text>
<text x="422.80" y="138.30" transform="rotate(0.03 422.80 138.30)" font-size="4.2" fill="#3c3c3c" stroke="#3c3c3c" stroke-width="0.1" text-anchor="middle" font-weight="normal" >Options [Mohr Circles]</text>
<line x1="503.80" y1="111.20" x2="503.80" y2="139.00" stroke="#909090" stroke-width="0.5" />
<line x1="504.30" y1="111.20" x2="504.30" y2="139.00" stroke="#d2d2d2" stroke-width="0.4" />
<text x="507.00" y="118.20" transform="rotate(0.03 507.00 118.20)" font-size="4.27" fill="#1a1a1a" stroke="#1a1a1a" stroke-width="0.1" text-anchor="start" font-weight="bold" text-decoration="underline">XY Position</text>
<line x1="507.00" y1="118.90" x2="531.00" y2="118.90" stroke="#1a1a1a" stroke-width="0.4" />
<text x="507.00" y="124.40" transform="rotate(0.03 507.00 124.40)" font-size="4.2" fill="#2a2a2a" stroke="#2a2a2a" stroke-width="0.1" text-anchor="start" font-weight="normal" >X: 0.0</text>
<text x="507.00" y="131.10" transform="rotate(0.03 507.00 131.10)" font-size="4.2" fill="#2a2a2a" stroke="#2a2a2a" stroke-width="0.1" text-anchor="start" font-weight="normal" >Y: 0.0</text>
<text x="519.40" y="138.30" transform="rotate(0.03 519.40 138.30)" font-size="4.2" fill="#3c3c3c" stroke="#3c3c3c" stroke-width="0.1" text-anchor="middle" font-weight="normal" >Cursor</text>
<line x1="533.50" y1="111.20" x2="533.50" y2="139.00" stroke="#909090" stroke-width="0.5" />
<line x1="534.00" y1="111.20" x2="534.00" y2="139.00" stroke="#d2d2d2" stroke-width="0.4" />
<rect x="304.10" y="140.50" width="563.90" height="274.70" fill="#555555" />
<rect x="304.10" y="140.50" width="563.90" height="1.60" fill="#5d5d5d" />
<text x="614.60" y="154.30" transform="rotate(0.03 614.60 154.30)" font-size="6.5" fill="#ffffff" stroke="#ffffff" stroke-width="0.1" text-anchor="middle" font-weight="bold" >Mohr Circles</text>
<rect x="479.20" y="162.50" width="270.80" height="245.60" fill="#4b4b4b" rx="2.6"/>
<rect x="480.10" y="163.40" width="268.95" height="243.80" fill="#ffffff" rx="1.8"/>
<line x1="532.72" y1="173.50" x2="532.72" y2="356.60" stroke="#e2e2e2" stroke-width="0.55" />
<line x1="552.94" y1="173.50" x2="552.94" y2="356.60" stroke="#e2e2e2" stroke-width="0.55" />
<line x1="573.16" y1="173.50" x2="573.16" y2="356.60" stroke="#e2e2e2" stroke-width="0.55" />
<line x1="593.38" y1="173.50" x2="593.38" y2="356.60" stroke="#e2e2e2" stroke-width="0.55" />
<line x1="613.60" y1="173.50" x2="613.60" y2="356.60" stroke="#e2e2e2" stroke-width="0.55" />
<line x1="633.82" y1="173.50" x2="633.82" y2="356.60" stroke="#e2e2e2" stroke-width="0.55" />
<line x1="654.04" y1="173.50" x2="654.04" y2="356.60" stroke="#e2e2e2" stroke-width="0.55" />
<line x1="674.26" y1="173.50" x2="674.26" y2="356.60" stroke="#e2e2e2" stroke-width="0.55" />
<line x1="694.48" y1="173.50" x2="694.48" y2="356.60" stroke="#e2e2e2" stroke-width="0.55" />
<line x1="714.70" y1="173.50" x2="714.70" y2="356.60" stroke="#e2e2e2" stroke-width="0.55" />
<line x1="512.50" y1="338.29" x2="714.70" y2="338.29" stroke="#e2e2e2" stroke-width="0.55" />
<line x1="512.50" y1="319.98" x2="714.70" y2="319.98" stroke="#e2e2e2" stroke-width="0.55" />
<line x1="512.50" y1="301.67" x2="714.70" y2="301.67" stroke="#e2e2e2" stroke-width="0.55" />
<line x1="512.50" y1="283.36" x2="714.70" y2="283.36" stroke="#e2e2e2" stroke-width="0.55" />
<line x1="512.50" y1="265.05" x2="714.70" y2="265.05" stroke="#e2e2e2" stroke-width="0.55" />
<line x1="512.50" y1="246.74" x2="714.70" y2="246.74" stroke="#e2e2e2" stroke-width="0.55" />
<line x1="512.50" y1="228.43" x2="714.70" y2="228.43" stroke="#e2e2e2" stroke-width="0.55" />
<line x1="512.50" y1="210.12" x2="714.70" y2="210.12" stroke="#e2e2e2" stroke-width="0.55" />
<line x1="512.50" y1="191.81" x2="714.70" y2="191.81" stroke="#e2e2e2" stroke-width="0.55" />
<line x1="512.50" y1="173.50" x2="714.70" y2="173.50" stroke="#e2e2e2" stroke-width="0.55" />
<line x1="512.50" y1="173.30" x2="512.50" y2="356.90" stroke="#222" stroke-width="0.7" />
<line x1="512.20" y1="356.60" x2="714.90" y2="356.60" stroke="#222" stroke-width="0.7" />
<line x1="510.30" y1="356.60" x2="512.50" y2="356.60" stroke="#222" stroke-width="0.6" />
<line x1="511.30" y1="347.45" x2="512.50" y2="347.45" stroke="#222" stroke-width="0.5" />
<text x="508.70" y="358.10" transform="rotate(0.03 508.70 358.10)" font-size="4.25" fill="#333" stroke="#333" stroke-width="0.1" text-anchor="end" font-weight="normal" >0.000</text>
<line x1="510.30" y1="338.29" x2="512.50" y2="338.29" stroke="#222" stroke-width="0.6" />
<line x1="511.30" y1="329.13" x2="512.50" y2="329.13" stroke="#222" stroke-width="0.5" />
<text x="508.70" y="339.79" transform="rotate(0.03 508.70 339.79)" font-size="4.25" fill="#333" stroke="#333" stroke-width="0.1" text-anchor="end" font-weight="normal" >6.925</text>
<line x1="510.30" y1="319.98" x2="512.50" y2="319.98" stroke="#222" stroke-width="0.6" />
<line x1="511.30" y1="310.83" x2="512.50" y2="310.83" stroke="#222" stroke-width="0.5" />
<text x="508.70" y="321.48" transform="rotate(0.03 508.70 321.48)" font-size="4.25" fill="#333" stroke="#333" stroke-width="0.1" text-anchor="end" font-weight="normal" >13.850</text>
<line x1="510.30" y1="301.67" x2="512.50" y2="301.67" stroke="#222" stroke-width="0.6" />
<line x1="511.30" y1="292.51" x2="512.50" y2="292.51" stroke="#222" stroke-width="0.5" />
<text x="508.70" y="303.17" transform="rotate(0.03 508.70 303.17)" font-size="4.25" fill="#333" stroke="#333" stroke-width="0.1" text-anchor="end" font-weight="normal" >20.775</text>
<line x1="510.30" y1="283.36" x2="512.50" y2="283.36" stroke="#222" stroke-width="0.6" />
<line x1="511.30" y1="274.21" x2="512.50" y2="274.21" stroke="#222" stroke-width="0.5" />
<text x="508.70" y="284.86" transform="rotate(0.03 508.70 284.86)" font-size="4.25" fill="#333" stroke="#333" stroke-width="0.1" text-anchor="end" font-weight="normal" >27.700</text>
<line x1="510.30" y1="265.05" x2="512.50" y2="265.05" stroke="#222" stroke-width="0.6" />
<line x1="511.30" y1="255.90" x2="512.50" y2="255.90" stroke="#222" stroke-width="0.5" />
<text x="508.70" y="266.55" transform="rotate(0.03 508.70 266.55)" font-size="4.25" fill="#333" stroke="#333" stroke-width="0.1" text-anchor="end" font-weight="normal" >34.625</text>
<line x1="510.30" y1="246.74" x2="512.50" y2="246.74" stroke="#222" stroke-width="0.6" />
<line x1="511.30" y1="237.59" x2="512.50" y2="237.59" stroke="#222" stroke-width="0.5" />
<text x="508.70" y="248.24" transform="rotate(0.03 508.70 248.24)" font-size="4.25" fill="#333" stroke="#333" stroke-width="0.1" text-anchor="end" font-weight="normal" >41.550</text>
<line x1="510.30" y1="228.43" x2="512.50" y2="228.43" stroke="#222" stroke-width="0.6" />
<line x1="511.30" y1="219.28" x2="512.50" y2="219.28" stroke="#222" stroke-width="0.5" />
<text x="508.70" y="229.93" transform="rotate(0.03 508.70 229.93)" font-size="4.25" fill="#333" stroke="#333" stroke-width="0.1" text-anchor="end" font-weight="normal" >48.475</text>
<line x1="510.30" y1="210.12" x2="512.50" y2="210.12" stroke="#222" stroke-width="0.6" />
<line x1="511.30" y1="200.97" x2="512.50" y2="200.97" stroke="#222" stroke-width="0.5" />
<text x="508.70" y="211.62" transform="rotate(0.03 508.70 211.62)" font-size="4.25" fill="#333" stroke="#333" stroke-width="0.1" text-anchor="end" font-weight="normal" >55.400</text>
<line x1="510.30" y1="191.81" x2="512.50" y2="191.81" stroke="#222" stroke-width="0.6" />
<line x1="511.30" y1="182.66" x2="512.50" y2="182.66" stroke="#222" stroke-width="0.5" />
<text x="508.70" y="193.31" transform="rotate(0.03 508.70 193.31)" font-size="4.25" fill="#333" stroke="#333" stroke-width="0.1" text-anchor="end" font-weight="normal" >62.325</text>
<line x1="510.30" y1="173.50" x2="512.50" y2="173.50" stroke="#222" stroke-width="0.6" />
<text x="508.70" y="175.00" transform="rotate(0.03 508.70 175.00)" font-size="4.25" fill="#333" stroke="#333" stroke-width="0.1" text-anchor="end" font-weight="normal" >69.250</text>
<line x1="522.61" y1="356.60" x2="522.61" y2="357.80" stroke="#222" stroke-width="0.5" />
<line x1="532.72" y1="356.60" x2="532.72" y2="358.60" stroke="#222" stroke-width="0.6" />
<line x1="542.83" y1="356.60" x2="542.83" y2="357.80" stroke="#222" stroke-width="0.5" />
<line x1="552.94" y1="356.60" x2="552.94" y2="358.60" stroke="#222" stroke-width="0.6" />
<line x1="563.05" y1="356.60" x2="563.05" y2="357.80" stroke="#222" stroke-width="0.5" />
<line x1="573.16" y1="356.60" x2="573.16" y2="358.60" stroke="#222" stroke-width="0.6" />
<line x1="583.27" y1="356.60" x2="583.27" y2="357.80" stroke="#222" stroke-width="0.5" />
<line x1="593.38" y1="356.60" x2="593.38" y2="358.60" stroke="#222" stroke-width="0.6" />
<line x1="603.49" y1="356.60" x2="603.49" y2="357.80" stroke="#222" stroke-width="0.5" />
<line x1="613.60" y1="356.60" x2="613.60" y2="358.60" stroke="#222" stroke-width="0.6" />
<line x1="623.71" y1="356.60" x2="623.71" y2="357.80" stroke="#222" stroke-width="0.5" />
<line x1="633.82" y1="356.60" x2="633.82" y2="358.60" stroke="#222" stroke-width="0.6" />
<line x1="643.93" y1="356.60" x2="643.93" y2="357.80" stroke="#222" stroke-width="0.5" />
<line x1="654.04" y1="356.60" x2="654.04" y2="358.60" stroke="#222" stroke-width="0.6" />
<line x1="664.15" y1="356.60" x2="664.15" y2="357.80" stroke="#222" stroke-width="0.5" />
<line x1="674.26" y1="356.60" x2="674.26" y2="358.60" stroke="#222" stroke-width="0.6" />
<line x1="684.37" y1="356.60" x2="684.37" y2="357.80" stroke="#222" stroke-width="0.5" />
<line x1="694.48" y1="356.60" x2="694.48" y2="358.60" stroke="#222" stroke-width="0.6" />
<line x1="704.59" y1="356.60" x2="704.59" y2="357.80" stroke="#222" stroke-width="0.5" />
<line x1="714.70" y1="356.60" x2="714.70" y2="358.60" stroke="#222" stroke-width="0.6" />
<text transform="translate(532.82 361.30) rotate(45.01)" font-size="4.25" fill="#333" text-anchor="start">96.950</text>
<text transform="translate(553.04 361.30) rotate(45.01)" font-size="4.25" fill="#333" text-anchor="start">103.875</text>
<text transform="translate(573.26 361.30) rotate(45.01)" font-size="4.25" fill="#333" text-anchor="start">110.800</text>
<text transform="translate(593.48 361.30) rotate(45.01)" font-size="4.25" fill="#333" text-anchor="start">117.725</text>
<text transform="translate(613.70 361.30) rotate(45.01)" font-size="4.25" fill="#333" text-anchor="start">124.650</text>
<text transform="translate(633.92 361.30) rotate(45.01)" font-size="4.25" fill="#333" text-anchor="start">131.575</text>
<text transform="translate(654.14 361.30) rotate(45.01)" font-size="4.25" fill="#333" text-anchor="start">138.500</text>
<text transform="translate(674.36 361.30) rotate(45.01)" font-size="4.25" fill="#333" text-anchor="start">145.425</text>
<text transform="translate(694.58 361.30) rotate(45.01)" font-size="4.25" fill="#333" text-anchor="start">152.350</text>
<text x="613.60" y="377.90" transform="rotate(0.03 613.60 377.90)" font-size="4.1" fill="#222" stroke="#222" stroke-width="0.1" text-anchor="middle" font-weight="normal" >Normal Stress (psi)</text>
<text transform="translate(493.60 265.00) rotate(-90.03)" font-size="4.1" fill="#222" stroke="#222" stroke-width="0.1" text-anchor="middle" font-weight="normal">Shear Stress (psi)</text>
<text x="553.40" y="175.00" transform="rotate(0.03 553.40 175.00)" font-size="4.25" fill="#111" stroke="#111" stroke-width="0.1" text-anchor="middle" font-weight="bold" font-style="italic">Strength Intercept = -13.755</text>
<text x="553.70" y="181.00" transform="rotate(0.03 553.70 181.00)" font-size="4.25" fill="#111" stroke="#111" stroke-width="0.1" text-anchor="middle" font-weight="bold" font-style="italic">Friction Angle = 13.6 °</text>
<line x1="517.60" y1="333.90" x2="705.70" y2="293.00" stroke="#6a6a6a" stroke-width="0.75" stroke-dasharray="3.2 1.4"/>
<path d="M515.60 333.90 L517.10 333.40 L517.60 332.30 L518.10 333.40 L519.60 333.90 L518.10 334.40 L517.60 335.50 L517.10 334.40z" fill="#2a2a2a"/>
<path d="M703.70 293.00 L705.20 292.50 L705.70 291.40 L706.20 292.50 L707.70 293.00 L706.20 293.50 L705.70 294.60 L705.20 293.50z" fill="#2a2a2a"/>
<path d="M512.50 356.60 A28.50 25.81 0 0 1 569.50 356.60" fill="none" stroke="#1c8c3c" stroke-width="1.15"/>
<path d="M541.40 356.60 A43.20 39.12 0 0 1 627.80 356.60" fill="none" stroke="#3a8ade" stroke-width="1.15"/>
<path d="M600.30 356.60 A57.30 51.89 0 0 1 714.90 356.60" fill="none" stroke="#c0282c" stroke-width="1.15"/>
<text x="540.70" y="330.00" transform="rotate(0.03 540.70 330.00)" font-size="4.2" fill="#1f9440" stroke="#1f9440" stroke-width="0.1" text-anchor="middle" font-weight="normal" >Specimen 1</text>
<text x="585.00" y="316.40" transform="rotate(0.03 585.00 316.40)" font-size="4.2" fill="#3f8ee0" stroke="#3f8ee0" stroke-width="0.1" text-anchor="middle" font-weight="normal" >Specimen 2</text>
<text x="657.40" y="303.70" transform="rotate(0.03 657.40 303.70)" font-size="4.2" fill="#c43030" stroke="#c43030" stroke-width="0.1" text-anchor="middle" font-weight="normal" >Specimen 3</text>
<circle cx="541.0" cy="331.4" r="0.6" fill="#1f9440"/>
<circle cx="584.6" cy="317.6" r="0.6" fill="#3f8ee0"/>
<circle cx="657.6" cy="304.6" r="0.6" fill="#c43030"/>
<rect x="753.00" y="277.00" width="112.70" height="17.20" fill="url(#gLegend)" rx="1.4"/>
<text x="809.00" y="281.60" transform="rotate(0.03 809.00 281.60)" font-size="4.1" fill="#222" stroke="#222" stroke-width="0.1" text-anchor="middle" font-weight="normal" >Legend</text>
<line x1="755.50" y1="290.00" x2="765.50" y2="290.00" stroke="#7a7a7a" stroke-width="0.6" stroke-dasharray="1.6 1"/>
<path d="M759.2 290 l1.3 -1.1 l1.3 1.1 l-1.3 1.1z" fill="#333"/>
<text x="768.30" y="291.40" transform="rotate(0.03 768.30 291.40)" font-size="4.1" fill="#222" stroke="#222" stroke-width="0.1" text-anchor="start" font-weight="normal" >Tangent Line</text>
<rect x="304.10" y="414.40" width="563.90" height="15.40" fill="url(#gBot)" />
<text x="318.60" y="420.50" transform="rotate(0.03 318.60 420.50)" font-size="4.2" fill="#2a6e36" stroke="#2a6e36" stroke-width="0.1" text-anchor="middle" font-weight="normal" >Specimen 1</text>
<text x="348.60" y="420.50" transform="rotate(0.03 348.60 420.50)" font-size="4.2" fill="#3a78c8" stroke="#3a78c8" stroke-width="0.1" text-anchor="middle" font-weight="normal" >Specimen 2</text>
<text x="378.80" y="420.50" transform="rotate(0.03 378.80 420.50)" font-size="4.2" fill="#b42c2c" stroke="#b42c2c" stroke-width="0.1" text-anchor="middle" font-weight="normal" >Specimen 3</text>
<text x="416.40" y="420.50" transform="rotate(0.03 416.40 420.50)" font-size="4.2" fill="#dedede" stroke="#dedede" stroke-width="0.1" text-anchor="middle" font-weight="normal" >Stress-Strain Graph</text>
<rect x="442.00" y="415.40" width="30.20" height="7.20" fill="#e8e8e8" rx="1.1"/>
<text x="457.20" y="420.50" transform="rotate(0.03 457.20 420.50)" font-size="4.1" fill="#1c1c1c" stroke="#1c1c1c" stroke-width="0.1" text-anchor="middle" font-weight="bold" >Mohr Circles</text>
<text x="479.30" y="420.50" transform="rotate(0.03 479.30 420.50)" font-size="4.2" fill="#dedede" stroke="#dedede" stroke-width="0.1" text-anchor="middle" font-weight="normal" >PQ</text>
<rect x="304.10" y="429.60" width="563.90" height="12.40" fill="#0c2e4e" />
<rect x="308.90" y="433.80" width="2.28" height="2.28" fill="#ffffff" />
<rect x="308.90" y="436.33" width="2.28" height="2.28" fill="#ffffff" />
<rect x="311.43" y="433.80" width="2.28" height="2.28" fill="#ffffff" />
<rect x="311.43" y="436.33" width="2.28" height="2.28" fill="#ffffff" />
<circle cx="327.15" cy="436.20" r="1.85" fill="none" stroke="#ffffff" stroke-width="0.90"/>
<rect x="340.24" y="434.50" width="5.51" height="3.39" fill="none" stroke="#dcdcdc" stroke-width="0.64" rx="0.85"/>
<line x1="339.50" y1="435.25" x2="339.50" y2="437.15" stroke="#dcdcdc" stroke-width="0.5" />
<line x1="346.50" y1="435.25" x2="346.50" y2="437.15" stroke="#dcdcdc" stroke-width="0.5" />
<text x="358.85" y="439.38" font-size="10.18" font-weight="bold" fill="#2f8ee8" stroke="#2f8ee8" stroke-width="0.15" text-anchor="middle">e</text>
<rect x="371.20" y="433.44" width="7.00" height="5.72" fill="#f5d560" rx="0.4"/>
<rect x="371.20" y="433.44" width="2.97" height="1.06" fill="#e8b83a" />
<rect x="372.58" y="436.31" width="4.24" height="2.86" fill="#4aa0e6" />
<rect x="373.64" y="437.47" width="2.12" height="1.70" fill="#f5d560" />
<rect x="389.28" y="433.44" width="5.09" height="5.30" fill="#3a8ee0" />
<rect x="390.97" y="434.72" width="2.76" height="2.76" fill="#d4e8fc" />
<rect x="386.73" y="434.08" width="4.24" height="4.45" fill="#1566c0" />
<text x="388.85" y="437.84" font-size="4.45" font-weight="bold" fill="#ffffff" text-anchor="middle">o</text>
<path d="M402.90 434.82 l1.1 -0.8 l2.3 1.9 l2.5 -2.9 l1.1 0.6 v5.2 l-1.1 0.6 l-2.5 -2.9 l-2.3 1.9 l-1.1 -0.8z" fill="#a864d8" transform="translate(-24.38 -26.17) scale(1.06)"/>
<path d="M407.67 434.93 v2.54 l-1.59 -1.27z" fill="#ffffff"/>
<rect x="418.86" y="433.13" width="6.78" height="6.15" fill="#e9a31e" rx="0.3"/>
<rect x="420.02" y="436.09" width="4.45" height="2.23" fill="#7a4c06" opacity="0.6"/>
<rect x="434.71" y="433.13" width="6.78" height="6.15" fill="#3cb840" rx="0.3"/>
<rect x="435.87" y="436.09" width="4.45" height="2.23" fill="#1c6a20" opacity="0.6"/>
<rect x="450.56" y="433.13" width="6.78" height="6.15" fill="#8e1c8e" rx="0.3"/>
<rect x="451.72" y="436.09" width="4.45" height="2.23" fill="#f070d0" opacity="0.6"/>
<rect x="466.41" y="433.13" width="6.78" height="6.15" fill="#b4bc30" rx="0.3"/>
<rect x="467.57" y="436.09" width="4.45" height="2.23" fill="#5c6410" opacity="0.6"/>
<rect x="482.26" y="433.13" width="6.78" height="6.15" fill="#bcd42a" rx="0.3"/>
<rect x="483.42" y="436.09" width="4.45" height="2.23" fill="#5c6410" opacity="0.6"/>
<rect x="352.55" y="440.80" width="12.60" height="1.20" fill="#8da7c0" />
<rect x="368.40" y="440.80" width="12.60" height="1.20" fill="#8da7c0" />
<rect x="384.25" y="440.80" width="12.60" height="1.20" fill="#8da7c0" />
<rect x="400.10" y="440.80" width="12.60" height="1.20" fill="#8da7c0" />
<rect x="415.95" y="440.80" width="12.60" height="1.20" fill="#8da7c0" />
<rect x="431.80" y="440.80" width="12.60" height="1.20" fill="#8da7c0" />
<rect x="447.65" y="440.80" width="12.60" height="1.20" fill="#8da7c0" />
<rect x="463.50" y="440.80" width="12.60" height="1.20" fill="#8da7c0" />
<rect x="479.35" y="440.80" width="12.60" height="1.20" fill="#8da7c0" />
</g>
</svg>
</body></html>
